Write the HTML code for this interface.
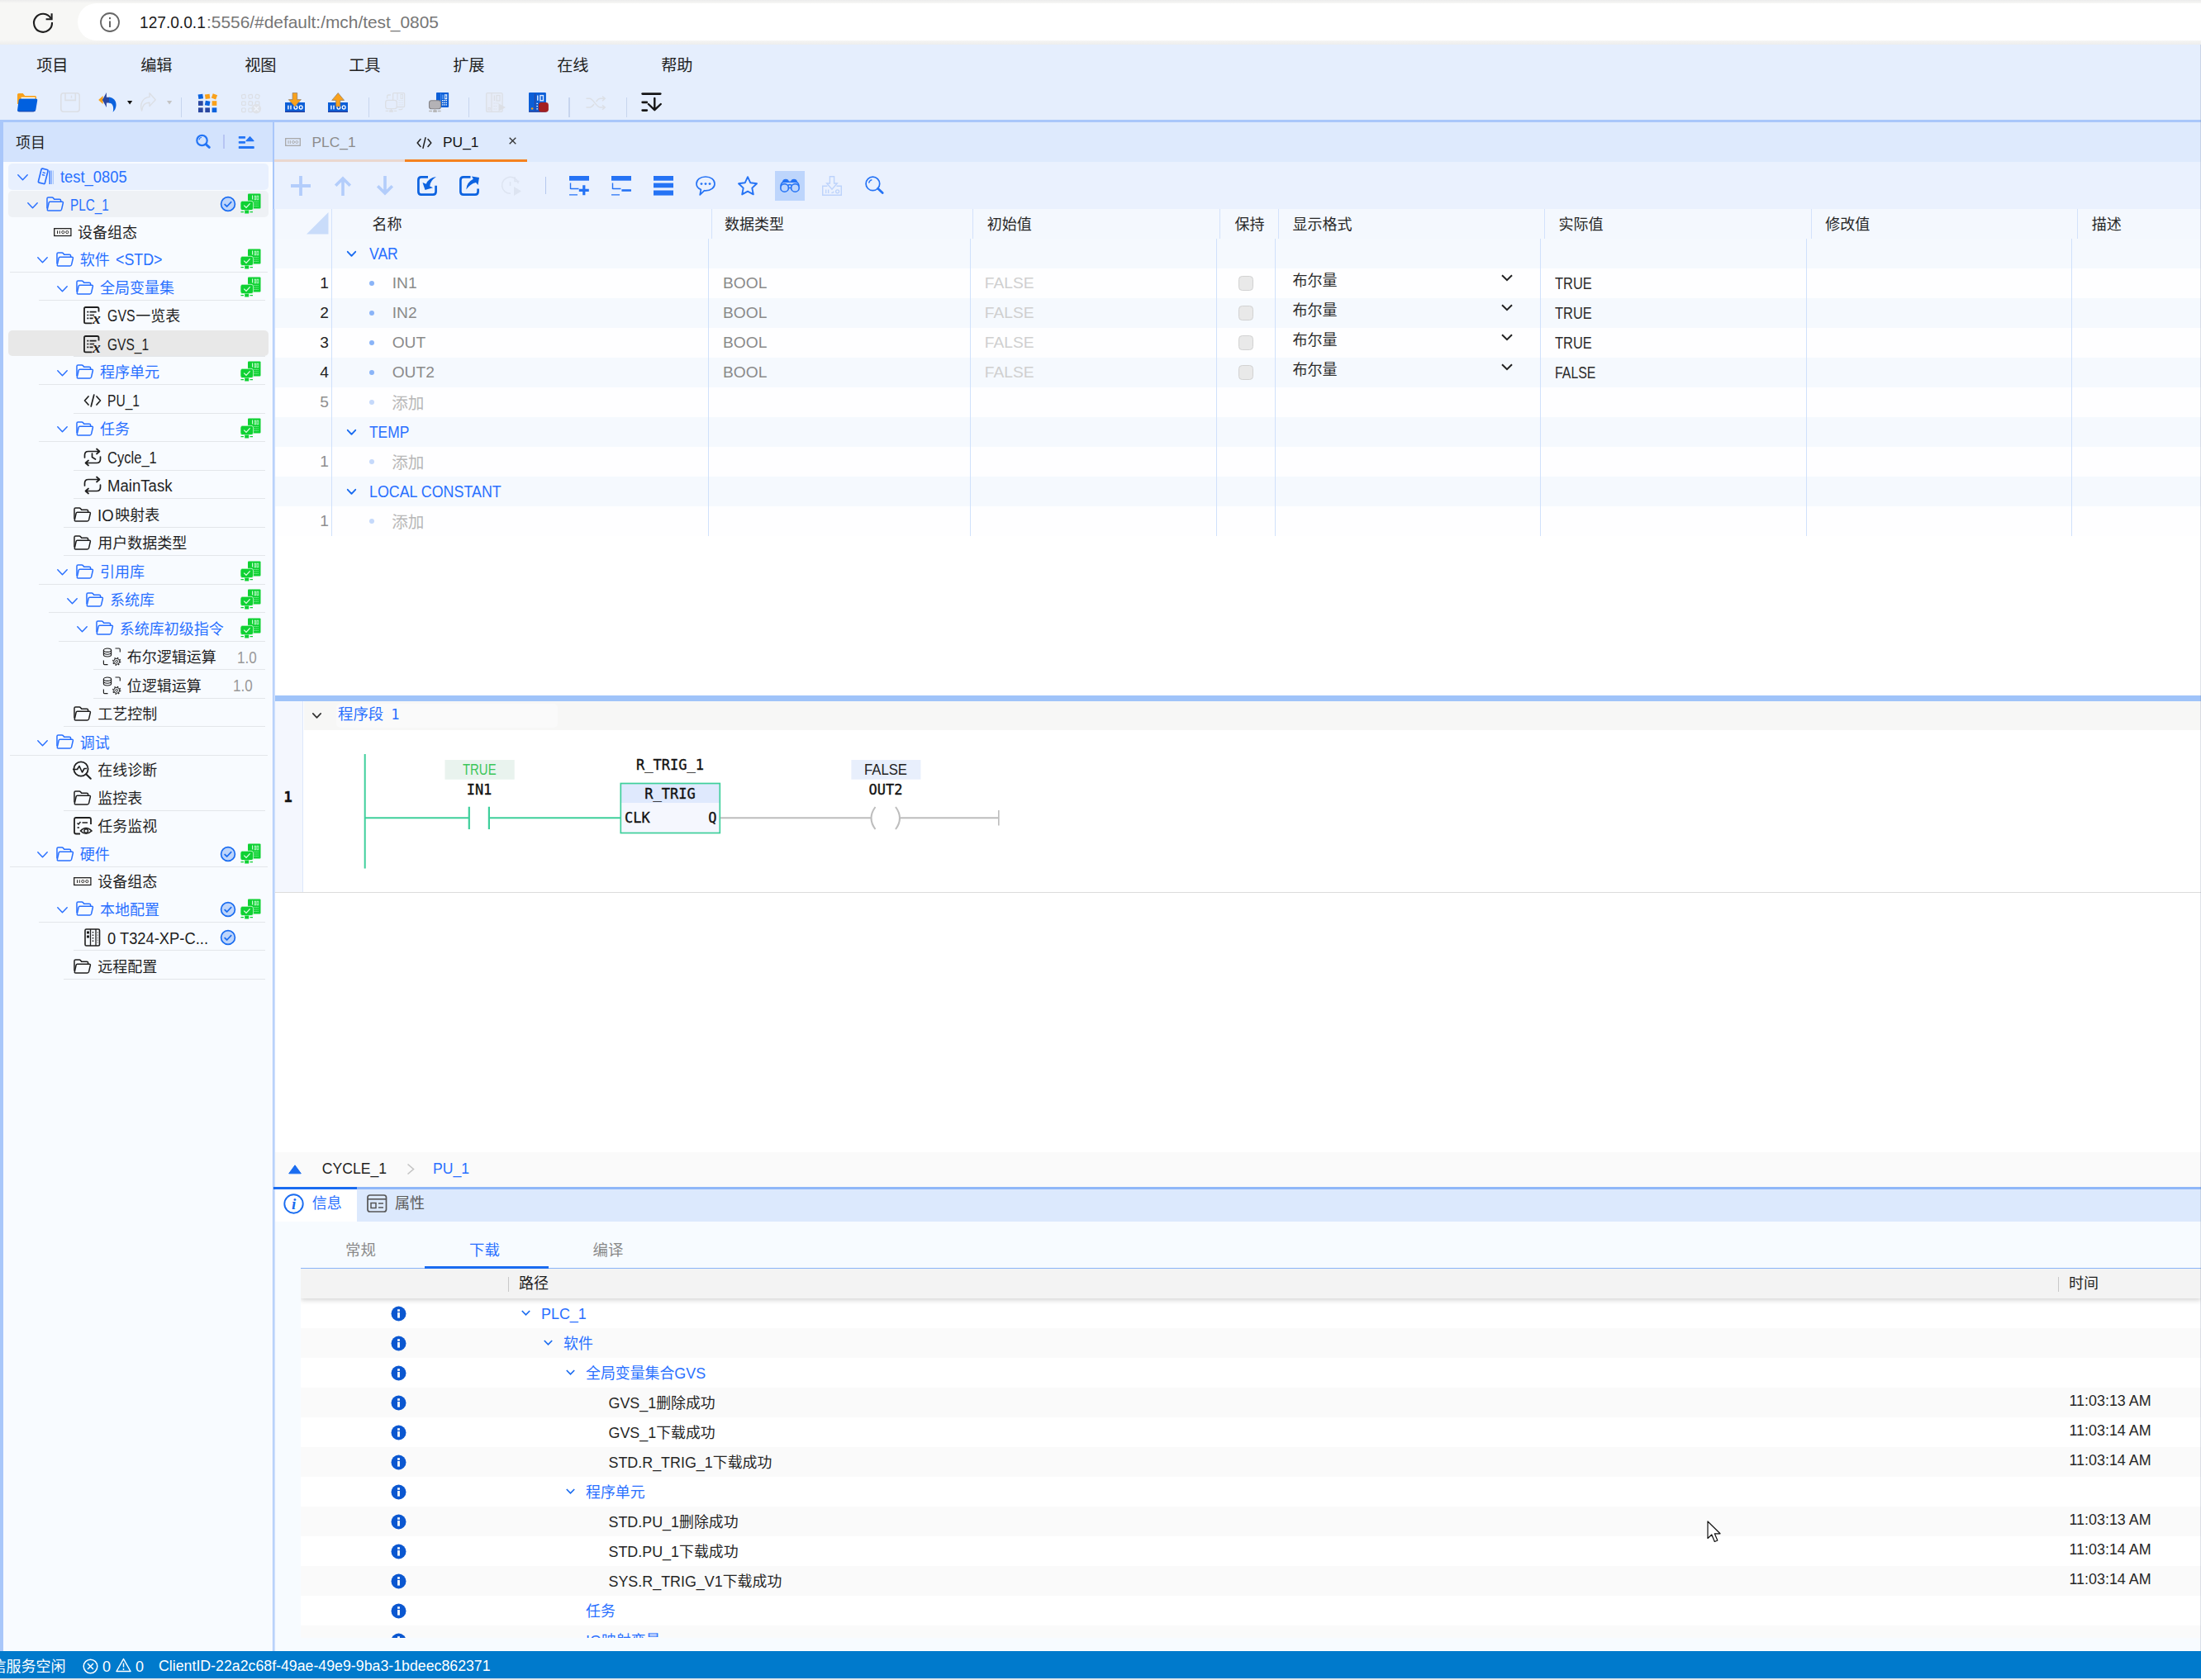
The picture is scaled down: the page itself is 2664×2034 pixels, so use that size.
<!DOCTYPE html>
<html lang="zh-CN"><head><meta charset="utf-8"><title>test_0805</title>
<style>
html,body{margin:0;padding:0}
body{width:2664px;height:2034px;position:relative;overflow:hidden;background:#fff;font-family:"Liberation Sans","Noto Sans CJK SC",sans-serif;color:#222}
.a{position:absolute}
.t{position:absolute;white-space:nowrap}
.m{position:absolute;white-space:nowrap;font-family:"DejaVu Sans Mono","Liberation Mono",monospace;-webkit-text-stroke:.35px currentColor}
svg{overflow:visible}
</style></head><body>

<div class="a" style="left:0px;top:0px;width:2664px;height:54px;background:#f7f7f5;background:linear-gradient(#ececec 0,#f7f7f5 4px,#f7f7f5 48px,#ededed 54px)"></div>
<div class="a" style="left:94px;top:4px;width:2620px;height:45px;background:#fff;border-radius:22.5px"></div>
<svg class="a" style="left:38px;top:13px;" width="28" height="28" viewBox="0 0 28 28"><path d="M23.5 9.2 A11 11 0 1 0 25 14" fill="none" stroke="#1f1f1f" stroke-width="2.1"/><path d="M24.6 3.2 V10.2 H17.6" fill="none" stroke="#1f1f1f" stroke-width="2.1"/></svg>
<svg class="a" style="left:120px;top:14px;" width="26" height="26" viewBox="0 0 26 26"><circle cx="13" cy="13" r="11" fill="none" stroke="#666" stroke-width="1.8"/><rect x="12" y="11.5" width="2" height="7.5" fill="#666"/><rect x="12" y="7" width="2" height="2.2" fill="#666"/></svg>
<div class="t" style="left:168.6px;top:12.0px;height:30px;line-height:30px;font-size:20.4px;color:#1b1b1b;transform:scaleX(0.938);transform-origin:0 50%;">127.0.0.1</div>
<div class="t" style="left:249.8px;top:12.0px;height:30px;line-height:30px;font-size:20.4px;color:#767676;transform:scaleX(1.024);transform-origin:0 50%;">:5556/#default:/mch/test_0805</div>
<div class="a" style="left:0px;top:54px;width:2664px;height:92px;background:#e5eefd;"></div>
<div class="t" style="left:44.2px;top:64.5px;height:30px;line-height:30px;font-size:19.2px;color:#222;">项目</div>
<div class="t" style="left:170.2px;top:64.5px;height:30px;line-height:30px;font-size:19.2px;color:#222;">编辑</div>
<div class="t" style="left:296.2px;top:64.5px;height:30px;line-height:30px;font-size:19.2px;color:#222;">视图</div>
<div class="t" style="left:422.2px;top:64.5px;height:30px;line-height:30px;font-size:19.2px;color:#222;">工具</div>
<div class="t" style="left:548.2px;top:64.5px;height:30px;line-height:30px;font-size:19.2px;color:#222;">扩展</div>
<div class="t" style="left:674.2px;top:64.5px;height:30px;line-height:30px;font-size:19.2px;color:#222;">在线</div>
<div class="t" style="left:800.2px;top:64.5px;height:30px;line-height:30px;font-size:19.2px;color:#222;">帮助</div>
<div class="a" style="left:0px;top:145px;width:2664px;height:3.2px;background:#a9c7fa;"></div>
<svg class="a" style="left:21px;top:112.9px;" width="25" height="23" viewBox="0 0 25 23"><path d="M0 1.6 Q0 0 1.6 0 H6.7 L9.2 3.1 H21.5 Q23 3.1 23 4.6 V13 H0Z" fill="#f9a11b"/><rect x="4.6" y="4.7" width="17" height="2.2" fill="#fff"/><path d="M3.8 6.4 H22.2 Q24.6 6.4 24.2 8.7 L22.3 19.9 Q21.9 22.3 19.5 22.3 H2.2 Q-.2 22.3 .1 19.9 L1.7 8.3 Q2 6.4 3.8 6.4Z" fill="#0060df"/><path d="M.5 20.6 Q1 22.3 2.4 22.3 H19.5 Q21.3 22.3 22 20.6 Q21 21.4 19.5 21.4 H2.6 Q1.2 21.4 .5 20.6Z" fill="#2a3f9d"/></svg>
<svg class="a" style="left:73.2px;top:111.5px;opacity:1;" width="24" height="24" viewBox="0 0 24 24"><rect x=".8" y=".8" width="22.4" height="22.4" rx="3.2" fill="none" stroke="#dcdfe5" stroke-width="1.6"/><path d="M6 1 V9.4 H18.3 V1" fill="none" stroke="#dcdfe5" stroke-width="1.6"/><rect x="12.8" y="3.6" width="1.4" height="3.2" fill="#dcdfe5"/></svg>
<svg class="a" style="left:119px;top:111.9px;" width="24" height="24" viewBox="0 0 24 24"><path d="M.2 9 L5.6 4 V14Z" fill="#f9a11b"/><path d="M4.9 9 L9.9 0 V5.7 H14.5 V12.6 H9.9 V18Z" fill="#2a47a0"/><path d="M13 5.7 C18 5.9 21.9 9.8 21.6 15.4 C21.4 19 19.6 22 17.6 23.8 C18.8 20 18.6 12.9 13 12.6Z" fill="#0b62de"/></svg>
<svg class="a" style="left:154px;top:121.7px;" width="6.2" height="4.4" viewBox="0 0 6.2 4.4"><path d="M0 0H6.2L3.1 4.4Z" fill="#111"/></svg>
<svg class="a" style="left:169px;top:112.3px;" width="20" height="23" viewBox="0 0 20 23"><path d="M12 .8 L19.2 8.7 L12 16.6 V12.3 C7 12 3.5 15 2.6 22 C-.5 13 4.5 6 12 5.4Z" fill="none" stroke="#dcdfe5" stroke-width="1.4" stroke-linejoin="round"/></svg>
<svg class="a" style="left:202px;top:121.7px;" width="6.2" height="4.4" viewBox="0 0 6.2 4.4"><path d="M0 0H6.2L3.1 4.4Z" fill="#c4c4c4"/></svg>
<div class="a" style="left:219px;top:118.4px;width:1.2px;height:23.3px;background:#c7d5ee;"></div>
<svg class="a" style="left:240.1px;top:111.9px;" width="24" height="26" viewBox="0 0 24 26"><rect x="0.0" y="2.0" width="5.7" height="5.7" fill="#0b62de" transform="rotate(-8 2.85 4.85)"/><rect x="8.3" y="2.0" width="5.7" height="5.7" fill="#f9a11b" transform="rotate(-8 11.15 4.85)"/><rect x="16.6" y="2.0" width="5.7" height="5.7" fill="#f9a11b" transform="rotate(20 19.450000000000003 4.85)"/><rect x="0.0" y="10.2" width="5.7" height="5.7" fill="#2a47a0"/><rect x="8.3" y="10.2" width="5.7" height="5.7" fill="#0b62de" transform="rotate(10 11.15 13.049999999999999)"/><rect x="16.6" y="10.2" width="5.7" height="5.7" fill="#f9a11b"/><rect x="0.0" y="18.4" width="5.7" height="5.7" fill="#2a47a0"/><rect x="8.3" y="18.4" width="5.7" height="5.7" fill="#2a47a0"/><rect x="16.6" y="18.4" width="5.7" height="5.7" fill="#0b62de"/></svg>
<svg class="a" style="left:292px;top:111.9px;" width="25" height="26" viewBox="0 0 25 26"><rect x="0.6" y="2.6" width="4.6" height="4.6" rx="1" fill="none" stroke="#dcdfe5" stroke-width="1.2" transform="rotate(-8 2.9 4.9)"/><rect x="8.9" y="2.6" width="4.6" height="4.6" rx="1" fill="none" stroke="#dcdfe5" stroke-width="1.2" transform="rotate(-8 11.2 4.9)"/><rect x="17.2" y="2.6" width="4.6" height="4.6" rx="1" fill="none" stroke="#dcdfe5" stroke-width="1.2" transform="rotate(20 19.500000000000004 4.9)"/><rect x="0.6" y="10.8" width="4.6" height="4.6" rx="1" fill="none" stroke="#dcdfe5" stroke-width="1.2"/><rect x="8.9" y="10.8" width="4.6" height="4.6" rx="1" fill="none" stroke="#dcdfe5" stroke-width="1.2" transform="rotate(10 11.2 13.099999999999998)"/><rect x="17.2" y="10.8" width="4.6" height="4.6" rx="1" fill="none" stroke="#dcdfe5" stroke-width="1.2"/><rect x="0.6" y="19.0" width="4.6" height="4.6" rx="1" fill="none" stroke="#dcdfe5" stroke-width="1.2"/><rect x="8.9" y="19.0" width="4.6" height="4.6" rx="1" fill="none" stroke="#dcdfe5" stroke-width="1.2"/><rect x="17.2" y="19.0" width="4.6" height="4.6" rx="1" fill="none" stroke="#dcdfe5" stroke-width="1.2"/><circle cx="18.3" cy="19.6" r="5.8" fill="#dfe2e8"/><path d="M15.6 16.9 L21 22.3 M21 16.9 L15.6 22.3" stroke="#eef3fc" stroke-width="1.5"/></svg>
<svg class="a" style="left:345px;top:111.9px;" width="24" height="24" viewBox="0 0 24 24"><rect x="0" y="12" width="24" height="12" fill="#0b5ed7"/><rect x="0" y="22.7" width="24" height="1.3" fill="#2a3f9d"/><rect x="3.2" y="15.6" width="1.4" height="4.8" fill="#fff"/><rect x="6.3" y="15.6" width="1.4" height="4.8" fill="#fff"/><ellipse cx="12.9" cy="18" rx="1.9" ry="2.1" fill="none" stroke="#fff" stroke-width="1.3"/><ellipse cx="19.2" cy="18" rx="1.9" ry="2.1" fill="none" stroke="#fff" stroke-width="1.3"/><path d="M9.1 .5 H14.7 V8.6 H19.4 L11.9 17 L4.3 8.6 H9.1Z" fill="#f9a11b" stroke="#8d7a66" stroke-width=".7"/></svg>
<svg class="a" style="left:397px;top:111.9px;" width="24" height="24" viewBox="0 0 24 24"><rect x="0" y="12" width="24" height="12" fill="#0b5ed7"/><rect x="0" y="22.7" width="24" height="1.3" fill="#2a3f9d"/><rect x="3.2" y="15.6" width="1.4" height="4.8" fill="#fff"/><rect x="6.3" y="15.6" width="1.4" height="4.8" fill="#fff"/><ellipse cx="12.9" cy="18" rx="1.9" ry="2.1" fill="none" stroke="#fff" stroke-width="1.3"/><ellipse cx="19.2" cy="18" rx="1.9" ry="2.1" fill="none" stroke="#fff" stroke-width="1.3"/><path d="M9.6 17 H14.8 V9.4 H19.6 L12.2 .5 L4.7 9.4 H9.6Z" fill="#f9a11b" stroke="#8d7a66" stroke-width=".7"/></svg>
<div class="a" style="left:445.5px;top:118.4px;width:1.2px;height:23.3px;background:#c7d5ee;"></div>
<svg class="a" style="left:466px;top:111.9px;" width="25" height="24" viewBox="0 0 25 24"><rect x="9.6" y=".7" width="14" height="16.8" rx="1" fill="none" stroke="#dcdfe5" stroke-width="1.3"/><path d="M15 .7 V9" stroke="#dcdfe5" stroke-width="1.1"/><rect x="19" y="2.4" width="2.4" height="5" fill="none" stroke="#dcdfe5" stroke-width="1"/><path d="M16.5 9.7 h5.5 M16.5 12.3 h5.5 M16.5 14.8 h5.5" stroke="#dcdfe5" stroke-width="1" stroke-dasharray="1.2 1"/><rect x=".7" y="9.3" width="13.6" height="10.4" rx="2.6" fill="#e5edfc" stroke="#dcdfe5" stroke-width="1.3"/><path d="M7.5 19.7 V23.2 M.7 22.4 H4.2 M10.8 22.4 H14.3" stroke="#dcdfe5" stroke-width="1.3"/><rect x="5.2" y="21.3" width="4.6" height="2.5" fill="#dcdfe5"/><path d="M2.6 7.5 V4.5 Q2.6 3 4.1 3 H7 M21 19.2 Q21 20.7 19.5 20.7 H16.5" fill="none" stroke="#dcdfe5" stroke-width="1.3"/></svg>
<svg class="a" style="left:519px;top:111.9px;" width="25" height="24" viewBox="0 0 25 24"><rect x="9" y="0" width="15.1" height="17.9" rx=".8" fill="#0b5ed7"/><path d="M14.6 1 V17" stroke="#3f86ee" stroke-width="1"/><path d="M16.4 2.6 V8 M18 2.6 V8" stroke="#5b9bf3" stroke-width="1"/><rect x="19.6" y="2.6" width="2.4" height="5.4" fill="#fff" stroke="#fff" stroke-width=".4"/><rect x="20.3" y="3.5" width="1" height="3.6" fill="#0b5ed7"/><path d="M16 9.7 h6 M16 12.3 h6 M16 14.8 h6" stroke="#fff" stroke-width="1.3" stroke-dasharray="1.5 .8"/><rect x=".5" y="9.7" width="14" height="10" rx="2.8" fill="#b4b2b6" stroke="#858387" stroke-width="1.1"/><path d="M7.4 19.7 V22 M.2 22.5 H4 M10.8 22.5 H14.6" stroke="#b9b9b9" stroke-width="1.3"/><rect x="5.2" y="21.3" width="4.6" height="2.6" fill="#b4b4b4"/></svg>
<div class="a" style="left:567.3px;top:118.4px;width:1.2px;height:23.3px;background:#c7d5ee;"></div>
<svg class="a" style="left:588px;top:111.9px;" width="25" height="24" viewBox="0 0 25 24"><rect x=".7" y=".7" width="19.4" height="22.6" rx="1.3" fill="#e6ecf8" stroke="#dcdfe5" stroke-width="1.3"/><path d="M7 .7 V23.3" stroke="#dcdfe5" stroke-width="1.2"/><path d="M10.4 3.5 V10" stroke="#dcdfe5" stroke-width="1.3"/><rect x="13" y="3.5" width="4" height="6.5" fill="none" stroke="#dcdfe5" stroke-width="1.2"/><path d="M9.5 13 h7 M9.5 16.5 h4 M9.5 20 h4" stroke="#dcdfe5" stroke-width="1.2" stroke-dasharray="1.3 1"/><rect x="3" y="18.5" width="2.2" height="2.6" fill="none" stroke="#dcdfe5" stroke-width=".9"/><path d="M15.5 13.3 L24 18 L15.5 22.7Z" fill="#dcdfe5"/></svg>
<svg class="a" style="left:640px;top:112px;" width="25" height="24" viewBox="0 0 25 24"><rect x="0" y="0" width="20.9" height="23.7" rx="1" fill="#0b5ed7"/><rect x="0" y="22.3" width="14" height="1.4" fill="#2a47a0"/><path d="M7.6 1.5 V22" stroke="#2a47a0" stroke-width="1.4"/><path d="M10.8 3.6 V9.8" stroke="#dbe8ff" stroke-width="1.5"/><rect x="13.9" y="3.6" width="3.6" height="6.2" fill="none" stroke="#dbe8ff" stroke-width="1.4"/><path d="M10.2 12.8 v1.3 M10.2 16 v1.3 M10.2 19.2 v1.3" stroke="#fff" stroke-width="1.5"/><circle cx="4.1" cy="19.5" r="1.3" fill="#f9a11b"/><rect x="11.9" y="12" width="12" height="11.7" rx="3.4" fill="#a31f1f"/></svg>
<div class="a" style="left:688.4px;top:118.4px;width:1.2px;height:23.3px;background:#c7d5ee;"></div>
<svg class="a" style="left:709px;top:111.9px;" width="25" height="24" viewBox="0 0 25 24"><path d="M.5 7.3 H4.5 C9.5 7.3 12.5 18 17.5 18 H22.5 M.5 18 H4.5 C7 18 8.6 16 10 14 M12.6 11 C14 9 15.6 7.3 17.5 7.3 H22.5" fill="none" stroke="#dcdfe5" stroke-width="1.4"/><path d="M20 4.5 L23.3 7.3 L20 10.1 M20 15.2 L23.3 18 L20 20.8" fill="none" stroke="#dcdfe5" stroke-width="1.4"/></svg>
<div class="a" style="left:757.5px;top:118.4px;width:1.2px;height:23.3px;background:#c7d5ee;"></div>
<svg class="a" style="left:776px;top:111.9px;" width="25" height="24" viewBox="0 0 25 24"><path d="M1.7 1.6 H23.2" stroke="#161616" stroke-width="2.8" stroke-linecap="round"/><path d="M1.7 11.8 H6.8 M1.7 21.6 H6.8" stroke="#161616" stroke-width="2.8" stroke-linecap="round"/><path d="M16.3 7 V20.5 M8.8 14 L16.3 21.2 L23.8 14" fill="none" stroke="#161616" stroke-width="2.4" stroke-linecap="round" stroke-linejoin="round"/></svg>
<div class="a" style="left:0px;top:148px;width:3.6px;height:1851px;background:#a9c7fa;"></div>
<div class="a" style="left:3.6px;top:148px;width:326px;height:48px;background:#d3e3fd;"></div>
<div class="a" style="left:3.6px;top:196px;width:326px;height:1803px;background:#f8fbff;"></div>
<div class="a" style="left:329.5px;top:148px;width:2.8px;height:105px;background:#a9c7fa;"></div>
<div class="a" style="left:329.5px;top:253px;width:1.8px;height:1746px;background:#a9c7fa;"></div>
<div class="a" style="left:331.3px;top:253px;width:1.4px;height:1746px;background:#c9dcfb;"></div>
<div class="t" style="left:19px;top:157.5px;height:30px;line-height:30px;font-size:18px;color:#1f1f1f;">项目</div>
<svg class="a" style="left:236px;top:161px;" width="20" height="20" viewBox="0 0 20 20"><circle cx="8.5" cy="9" r="6.2" fill="none" stroke="#2475f5" stroke-width="2.2"/><path d="M13.4 13.9 L17.3 17.3" stroke="#2475f5" stroke-width="3" stroke-linecap="round"/><path d="M5 8.3 A3.7 3.7 0 0 1 8 5.2" fill="none" stroke="#2475f5" stroke-width="1.1"/></svg>
<div class="a" style="left:270.3px;top:163.2px;width:1.4px;height:17.3px;background:#b7c5f3;"></div>
<svg class="a" style="left:288px;top:164px;" width="21" height="17" viewBox="0 0 21 17"><rect x=".75" y="1" width="8.3" height="2.8" rx=".8" fill="#2475f5"/><rect x=".75" y="7" width="8.3" height="2.8" rx=".8" fill="#2475f5"/><rect x=".75" y="13" width="19" height="3" rx=".8" fill="#2475f5"/><path d="M14.5 1.6 L19 6.6 H10Z" fill="#2475f5" stroke="#2475f5" stroke-width="1.2" stroke-linejoin="round"/></svg>
<div class="a" style="left:10px;top:198px;width:315px;height:31.5px;background:#e8f0fe;border-radius:5px"></div>
<div class="a" style="left:10px;top:231.3px;width:315px;height:31.7px;background:#eef1f5;border-radius:5px"></div>
<div class="a" style="left:10px;top:400.3px;width:315px;height:31px;background:#e8e8e8;border-radius:5px"></div>
<svg class="a" style="left:21.0px;top:210.65px;" width="13" height="8.5" viewBox="0 0 13 8.5"><path d="M0.8 0.8 L6.5 6.8 L12.2 0.8" fill="none" stroke="#2970ff" stroke-width="1.45" stroke-linecap="round" stroke-linejoin="round"/></svg>
<svg class="a" style="left:45.5px;top:203.4px;" width="20" height="21" viewBox="0 0 20 21"><g transform="rotate(14 6 10)"><rect x="2.2" y="1.5" width="8.2" height="17.5" rx="1.2" fill="none" stroke="#2970ff" stroke-width="1.7"/><path d="M4.6 6 H8 M4.6 8.8 H8" stroke="#2970ff" stroke-width="1.4"/></g><path d="M14.2 3.5 V20" stroke="#2970ff" stroke-width="1.4"/><path d="M16.4 3.5 V20" stroke="#7aa6ff" stroke-width="1.2"/><path d="M18.4 3.5 V20" stroke="#a9c7fa" stroke-width="1.1"/></svg>
<div class="t" style="left:73px;top:199.2px;height:30px;line-height:30px;font-size:19.6px;color:#2970ff;transform:scaleX(0.937);transform-origin:0 50%;">test_0805</div>
<svg class="a" style="left:33.0px;top:244.55px;" width="13" height="8.5" viewBox="0 0 13 8.5"><path d="M0.8 0.8 L6.5 6.8 L12.2 0.8" fill="none" stroke="#2970ff" stroke-width="1.45" stroke-linecap="round" stroke-linejoin="round"/></svg>
<svg class="a" style="left:55.8px;top:237.7px" width="21.3" height="17.9" viewBox="0 0 22 19" preserveAspectRatio="none"><path d="M1 15.5 V2.6 Q1 1 2.6 1 H7.2 Q8.2 1 8.8 1.8 L10 3.4 H16.6 Q18.2 3.4 18.2 5 V6.6" fill="none" stroke="#2970ff" stroke-width="1.55" stroke-linejoin="round"/><path d="M4.6 6.6 H19.8 Q21.4 6.6 21 8.2 L19.2 16.4 Q18.8 18 17.2 18 H2.6 Q1 18 1.4 16.4 L3.2 8 Q3.6 6.6 4.6 6.6Z" fill="none" stroke="#2970ff" stroke-width="1.55" stroke-linejoin="round"/></svg>
<div class="t" style="left:85.1px;top:232.6px;height:30px;line-height:30px;font-size:19.6px;color:#2970ff;transform:scaleX(0.779);transform-origin:0 50%;">PLC_1</div>
<svg class="a" style="left:266px;top:237.3px;" width="20" height="20" viewBox="0 0 20 20"><circle cx="10" cy="10" r="8.4" fill="#bed5fb" stroke="#1a6cf0" stroke-width="1.7"/><path d="M5.6 10.2 L8.7 13 L14.2 7.2" fill="none" stroke="#1a6cf0" stroke-width="1.7" stroke-linejoin="round"/></svg>
<svg class="a" style="left:290.8px;top:234.10000000000002px;" width="25" height="25" viewBox="0 0 25 25"><rect x="9" y=".5" width="15.5" height="18" rx="1" fill="#0fd133"/><path d="M14.5 2.5 V7.5" stroke="#d8ffe0" stroke-width="1"/><rect x="17" y="3.2" width="1.6" height="4.6" fill="none" stroke="#b5f7c2" stroke-width=".9"/><rect x="20" y="3.2" width="1.8" height="4.6" fill="none" stroke="#b5f7c2" stroke-width=".9"/><path d="M16.5 10.5 h6 M16.5 13 h6 M16.5 15.5 h6" stroke="#7fee97" stroke-width="1.1" stroke-dasharray="1.3 .7"/><rect x="0" y="9.3" width="15.6" height="11.3" rx="2.6" fill="#0fd133" stroke="#f4fff6" stroke-width=".7"/><path d="M4.3 14.6 L7 17.4 L11.6 12.4" fill="none" stroke="#e6ffe9" stroke-width="1.2"/><rect x="5.2" y="20.5" width="5" height="4" fill="#0fd133"/><path d="M.5 22.6 H4 M11.5 22.6 H15" stroke="#0fd133" stroke-width="1.3"/></svg>
<svg class="a" style="left:64.8px;top:276.0px;" width="22" height="11" viewBox="0 0 22 11"><rect x=".7" y=".7" width="20.2" height="8.8" fill="#fff" stroke="#1f1f1f" stroke-width="1.3"/><path d="M4.5 3.3 V7 M7.2 3.3 V7" stroke="#1f1f1f" stroke-width="1"/><circle cx="11.3" cy="5.1" r="1.6" fill="none" stroke="#1f1f1f" stroke-width=".9"/><circle cx="16.3" cy="5.1" r="1.6" fill="none" stroke="#1f1f1f" stroke-width=".9"/></svg>
<div class="t" style="left:94px;top:267.3px;height:30px;line-height:30px;font-size:18px;color:#1f1f1f;">设备组态</div>
<div class="a" style="left:12px;top:329px;width:311.5px;height:1px;background:#e3e6ea;"></div>
<svg class="a" style="left:44.7px;top:311.35px;" width="13" height="8.5" viewBox="0 0 13 8.5"><path d="M0.8 0.8 L6.5 6.8 L12.2 0.8" fill="none" stroke="#2970ff" stroke-width="1.45" stroke-linecap="round" stroke-linejoin="round"/></svg>
<svg class="a" style="left:67.5px;top:304.5px" width="21.3" height="17.9" viewBox="0 0 22 19" preserveAspectRatio="none"><path d="M1 15.5 V2.6 Q1 1 2.6 1 H7.2 Q8.2 1 8.8 1.8 L10 3.4 H16.6 Q18.2 3.4 18.2 5 V6.6" fill="none" stroke="#2970ff" stroke-width="1.55" stroke-linejoin="round"/><path d="M4.6 6.6 H19.8 Q21.4 6.6 21 8.2 L19.2 16.4 Q18.8 18 17.2 18 H2.6 Q1 18 1.4 16.4 L3.2 8 Q3.6 6.6 4.6 6.6Z" fill="none" stroke="#2970ff" stroke-width="1.55" stroke-linejoin="round"/></svg>
<div class="t" style="left:96.80000000000001px;top:299.9px;height:30px;line-height:30px;font-size:18px;color:#2970ff;">软件</div>
<div class="t" style="left:140.3px;top:299.4px;height:30px;line-height:30px;font-size:19.6px;color:#2970ff;transform:scaleX(0.910);transform-origin:0 50%;">&lt;STD&gt;</div>
<svg class="a" style="left:290.8px;top:300.90000000000003px;" width="25" height="25" viewBox="0 0 25 25"><rect x="9" y=".5" width="15.5" height="18" rx="1" fill="#0fd133"/><path d="M14.5 2.5 V7.5" stroke="#d8ffe0" stroke-width="1"/><rect x="17" y="3.2" width="1.6" height="4.6" fill="none" stroke="#b5f7c2" stroke-width=".9"/><rect x="20" y="3.2" width="1.8" height="4.6" fill="none" stroke="#b5f7c2" stroke-width=".9"/><path d="M16.5 10.5 h6 M16.5 13 h6 M16.5 15.5 h6" stroke="#7fee97" stroke-width="1.1" stroke-dasharray="1.3 .7"/><rect x="0" y="9.3" width="15.6" height="11.3" rx="2.6" fill="#0fd133" stroke="#f4fff6" stroke-width=".7"/><path d="M4.3 14.6 L7 17.4 L11.6 12.4" fill="none" stroke="#e6ffe9" stroke-width="1.2"/><rect x="5.2" y="20.5" width="5" height="4" fill="#0fd133"/><path d="M.5 22.6 H4 M11.5 22.6 H15" stroke="#0fd133" stroke-width="1.3"/></svg>
<div class="a" style="left:47px;top:363px;width:274px;height:1px;background:#e3e6ea;"></div>
<svg class="a" style="left:69.0px;top:345.75px;" width="13" height="8.5" viewBox="0 0 13 8.5"><path d="M0.8 0.8 L6.5 6.8 L12.2 0.8" fill="none" stroke="#2970ff" stroke-width="1.45" stroke-linecap="round" stroke-linejoin="round"/></svg>
<svg class="a" style="left:91.8px;top:338.9px" width="21.3" height="17.9" viewBox="0 0 22 19" preserveAspectRatio="none"><path d="M1 15.5 V2.6 Q1 1 2.6 1 H7.2 Q8.2 1 8.8 1.8 L10 3.4 H16.6 Q18.2 3.4 18.2 5 V6.6" fill="none" stroke="#2970ff" stroke-width="1.55" stroke-linejoin="round"/><path d="M4.6 6.6 H19.8 Q21.4 6.6 21 8.2 L19.2 16.4 Q18.8 18 17.2 18 H2.6 Q1 18 1.4 16.4 L3.2 8 Q3.6 6.6 4.6 6.6Z" fill="none" stroke="#2970ff" stroke-width="1.55" stroke-linejoin="round"/></svg>
<div class="t" style="left:121.1px;top:334.3px;height:30px;line-height:30px;font-size:18px;color:#2970ff;">全局变量集</div>
<svg class="a" style="left:290.8px;top:335.3px;" width="25" height="25" viewBox="0 0 25 25"><rect x="9" y=".5" width="15.5" height="18" rx="1" fill="#0fd133"/><path d="M14.5 2.5 V7.5" stroke="#d8ffe0" stroke-width="1"/><rect x="17" y="3.2" width="1.6" height="4.6" fill="none" stroke="#b5f7c2" stroke-width=".9"/><rect x="20" y="3.2" width="1.8" height="4.6" fill="none" stroke="#b5f7c2" stroke-width=".9"/><path d="M16.5 10.5 h6 M16.5 13 h6 M16.5 15.5 h6" stroke="#7fee97" stroke-width="1.1" stroke-dasharray="1.3 .7"/><rect x="0" y="9.3" width="15.6" height="11.3" rx="2.6" fill="#0fd133" stroke="#f4fff6" stroke-width=".7"/><path d="M4.3 14.6 L7 17.4 L11.6 12.4" fill="none" stroke="#e6ffe9" stroke-width="1.2"/><rect x="5.2" y="20.5" width="5" height="4" fill="#0fd133"/><path d="M.5 22.6 H4 M11.5 22.6 H15" stroke="#0fd133" stroke-width="1.3"/></svg>
<svg class="a" style="left:100.8px;top:371.4px;" width="22" height="22" viewBox="0 0 22 22"><path d="M18.5 6.5 V2.6 Q18.5 1 16.9 1 H2.6 Q1 1 1 2.6 V18.8 Q1 20.4 2.6 20.4 H10.5" fill="none" stroke="#1f1f1f" stroke-width="1.8"/><path d="M4.3 6.6 h2 M7.6 6.6 h8 M4.3 10.5 h2 M7.6 10.5 h5.5 M4.3 14.4 h2 M7.6 14.4 h4" stroke="#1f1f1f" stroke-width="1.6"/><text x="11.2" y="20.6" font-family="Liberation Serif,serif" font-style="italic" font-weight="bold" font-size="19" fill="#1f1f1f">x</text></svg>
<div class="t" style="left:129.6px;top:367.2px;height:30px;line-height:30px;font-size:19.6px;color:#1f1f1f;transform:scaleX(0.812);transform-origin:0 50%;">GVS</div>
<div class="t" style="left:164.3px;top:367.7px;height:30px;line-height:30px;font-size:18px;color:#1f1f1f;">一览表</div>
<div class="a" style="left:89px;top:431px;width:232px;height:1px;background:#e3e6ea;"></div>
<svg class="a" style="left:100.8px;top:405.8px;" width="22" height="22" viewBox="0 0 22 22"><path d="M18.5 6.5 V2.6 Q18.5 1 16.9 1 H2.6 Q1 1 1 2.6 V18.8 Q1 20.4 2.6 20.4 H10.5" fill="none" stroke="#1f1f1f" stroke-width="1.8"/><path d="M4.3 6.6 h2 M7.6 6.6 h8 M4.3 10.5 h2 M7.6 10.5 h5.5 M4.3 14.4 h2 M7.6 14.4 h4" stroke="#1f1f1f" stroke-width="1.6"/><text x="11.2" y="20.6" font-family="Liberation Serif,serif" font-style="italic" font-weight="bold" font-size="19" fill="#1f1f1f">x</text></svg>
<div class="t" style="left:129.6px;top:401.6px;height:30px;line-height:30px;font-size:19.6px;color:#1f1f1f;transform:scaleX(0.794);transform-origin:0 50%;">GVS_1</div>
<div class="a" style="left:47px;top:465px;width:274px;height:1px;background:#e3e6ea;"></div>
<svg class="a" style="left:69.0px;top:447.75px;" width="13" height="8.5" viewBox="0 0 13 8.5"><path d="M0.8 0.8 L6.5 6.8 L12.2 0.8" fill="none" stroke="#2970ff" stroke-width="1.45" stroke-linecap="round" stroke-linejoin="round"/></svg>
<svg class="a" style="left:91.8px;top:440.9px" width="21.3" height="17.9" viewBox="0 0 22 19" preserveAspectRatio="none"><path d="M1 15.5 V2.6 Q1 1 2.6 1 H7.2 Q8.2 1 8.8 1.8 L10 3.4 H16.6 Q18.2 3.4 18.2 5 V6.6" fill="none" stroke="#2970ff" stroke-width="1.55" stroke-linejoin="round"/><path d="M4.6 6.6 H19.8 Q21.4 6.6 21 8.2 L19.2 16.4 Q18.8 18 17.2 18 H2.6 Q1 18 1.4 16.4 L3.2 8 Q3.6 6.6 4.6 6.6Z" fill="none" stroke="#2970ff" stroke-width="1.55" stroke-linejoin="round"/></svg>
<div class="t" style="left:121.1px;top:436.3px;height:30px;line-height:30px;font-size:18px;color:#2970ff;">程序单元</div>
<svg class="a" style="left:290.8px;top:437.3px;" width="25" height="25" viewBox="0 0 25 25"><rect x="9" y=".5" width="15.5" height="18" rx="1" fill="#0fd133"/><path d="M14.5 2.5 V7.5" stroke="#d8ffe0" stroke-width="1"/><rect x="17" y="3.2" width="1.6" height="4.6" fill="none" stroke="#b5f7c2" stroke-width=".9"/><rect x="20" y="3.2" width="1.8" height="4.6" fill="none" stroke="#b5f7c2" stroke-width=".9"/><path d="M16.5 10.5 h6 M16.5 13 h6 M16.5 15.5 h6" stroke="#7fee97" stroke-width="1.1" stroke-dasharray="1.3 .7"/><rect x="0" y="9.3" width="15.6" height="11.3" rx="2.6" fill="#0fd133" stroke="#f4fff6" stroke-width=".7"/><path d="M4.3 14.6 L7 17.4 L11.6 12.4" fill="none" stroke="#e6ffe9" stroke-width="1.2"/><rect x="5.2" y="20.5" width="5" height="4" fill="#0fd133"/><path d="M.5 22.6 H4 M11.5 22.6 H15" stroke="#0fd133" stroke-width="1.3"/></svg>
<div class="a" style="left:89px;top:500px;width:232px;height:1px;background:#e3e6ea;"></div>
<svg class="a" style="left:100.8px;top:477.0px;" width="22" height="16" viewBox="0 0 22 16"><path d="M6 3 L1.5 8 L6 13 M16 3 L20.5 8 L16 13 M12.8 1 L9.2 15" fill="none" stroke="#1f1f1f" stroke-width="1.7" stroke-linecap="round" stroke-linejoin="round"/></svg>
<div class="t" style="left:129.6px;top:470.3px;height:30px;line-height:30px;font-size:19.6px;color:#1f1f1f;transform:scaleX(0.795);transform-origin:0 50%;">PU_1</div>
<div class="a" style="left:47px;top:534px;width:274px;height:1px;background:#e3e6ea;"></div>
<svg class="a" style="left:69.0px;top:516.35px;" width="13" height="8.5" viewBox="0 0 13 8.5"><path d="M0.8 0.8 L6.5 6.8 L12.2 0.8" fill="none" stroke="#2970ff" stroke-width="1.45" stroke-linecap="round" stroke-linejoin="round"/></svg>
<svg class="a" style="left:91.8px;top:509.5px" width="21.3" height="17.9" viewBox="0 0 22 19" preserveAspectRatio="none"><path d="M1 15.5 V2.6 Q1 1 2.6 1 H7.2 Q8.2 1 8.8 1.8 L10 3.4 H16.6 Q18.2 3.4 18.2 5 V6.6" fill="none" stroke="#2970ff" stroke-width="1.55" stroke-linejoin="round"/><path d="M4.6 6.6 H19.8 Q21.4 6.6 21 8.2 L19.2 16.4 Q18.8 18 17.2 18 H2.6 Q1 18 1.4 16.4 L3.2 8 Q3.6 6.6 4.6 6.6Z" fill="none" stroke="#2970ff" stroke-width="1.55" stroke-linejoin="round"/></svg>
<div class="t" style="left:121.1px;top:504.9px;height:30px;line-height:30px;font-size:18px;color:#2970ff;">任务</div>
<svg class="a" style="left:290.8px;top:505.9px;" width="25" height="25" viewBox="0 0 25 25"><rect x="9" y=".5" width="15.5" height="18" rx="1" fill="#0fd133"/><path d="M14.5 2.5 V7.5" stroke="#d8ffe0" stroke-width="1"/><rect x="17" y="3.2" width="1.6" height="4.6" fill="none" stroke="#b5f7c2" stroke-width=".9"/><rect x="20" y="3.2" width="1.8" height="4.6" fill="none" stroke="#b5f7c2" stroke-width=".9"/><path d="M16.5 10.5 h6 M16.5 13 h6 M16.5 15.5 h6" stroke="#7fee97" stroke-width="1.1" stroke-dasharray="1.3 .7"/><rect x="0" y="9.3" width="15.6" height="11.3" rx="2.6" fill="#0fd133" stroke="#f4fff6" stroke-width=".7"/><path d="M4.3 14.6 L7 17.4 L11.6 12.4" fill="none" stroke="#e6ffe9" stroke-width="1.2"/><rect x="5.2" y="20.5" width="5" height="4" fill="#0fd133"/><path d="M.5 22.6 H4 M11.5 22.6 H15" stroke="#0fd133" stroke-width="1.3"/></svg>
<div class="a" style="left:89px;top:569px;width:232px;height:1px;background:#e3e6ea;"></div>
<svg class="a" style="left:100.8px;top:543.3px;" width="22" height="21" viewBox="0 0 22 21"><path d="M1.5 11 V8 Q1.5 3.5 6 3.5 H19 M16 .5 L19.5 3.5 L16 6.5" fill="none" stroke="#1f1f1f" stroke-width="1.7" stroke-linecap="round" stroke-linejoin="round"/><path d="M20.5 10 V13 Q20.5 17.5 16 17.5 H3 M6 14.5 L2.5 17.5 L6 20.5" fill="none" stroke="#1f1f1f" stroke-width="1.7" stroke-linecap="round" stroke-linejoin="round"/><path d="M10.5 6 V10.5 L14.5 13" fill="none" stroke="#1f1f1f" stroke-width="1.7" stroke-linecap="round" stroke-linejoin="round"/></svg>
<div class="t" style="left:129.6px;top:539.1px;height:30px;line-height:30px;font-size:19.6px;color:#1f1f1f;transform:scaleX(0.845);transform-origin:0 50%;">Cycle_1</div>
<div class="a" style="left:89px;top:603px;width:232px;height:1px;background:#e3e6ea;"></div>
<svg class="a" style="left:100.8px;top:577.3px;" width="22" height="21" viewBox="0 0 22 21"><path d="M1.5 11 V8 Q1.5 3.5 6 3.5 H19 M16 .5 L19.5 3.5 L16 6.5" fill="none" stroke="#1f1f1f" stroke-width="1.7" stroke-linecap="round" stroke-linejoin="round"/><path d="M20.5 10 V13 Q20.5 17.5 16 17.5 H3 M6 14.5 L2.5 17.5 L6 20.5" fill="none" stroke="#1f1f1f" stroke-width="1.7" stroke-linecap="round" stroke-linejoin="round"/></svg>
<div class="t" style="left:129.6px;top:573.1px;height:30px;line-height:30px;font-size:19.6px;color:#1f1f1f;transform:scaleX(0.948);transform-origin:0 50%;">MainTask</div>
<div class="a" style="left:77px;top:638px;width:244px;height:1px;background:#e3e6ea;"></div>
<svg class="a" style="left:88.7px;top:613.7px" width="21.3" height="17.9" viewBox="0 0 22 19" preserveAspectRatio="none"><path d="M1 15.5 V2.6 Q1 1 2.6 1 H7.2 Q8.2 1 8.8 1.8 L10 3.4 H16.6 Q18.2 3.4 18.2 5 V6.6" fill="none" stroke="#1f1f1f" stroke-width="1.55" stroke-linejoin="round"/><path d="M4.6 6.6 H19.8 Q21.4 6.6 21 8.2 L19.2 16.4 Q18.8 18 17.2 18 H2.6 Q1 18 1.4 16.4 L3.2 8 Q3.6 6.6 4.6 6.6Z" fill="none" stroke="#1f1f1f" stroke-width="1.55" stroke-linejoin="round"/></svg>
<div class="t" style="left:118.2px;top:608.6px;height:30px;line-height:30px;font-size:19.6px;color:#1f1f1f;transform:scaleX(0.947);transform-origin:0 50%;">IO</div>
<div class="t" style="left:139.3px;top:609.1px;height:30px;line-height:30px;font-size:18px;color:#1f1f1f;">映射表</div>
<div class="a" style="left:77px;top:672px;width:244px;height:1px;background:#e3e6ea;"></div>
<svg class="a" style="left:88.7px;top:647.5px" width="21.3" height="17.9" viewBox="0 0 22 19" preserveAspectRatio="none"><path d="M1 15.5 V2.6 Q1 1 2.6 1 H7.2 Q8.2 1 8.8 1.8 L10 3.4 H16.6 Q18.2 3.4 18.2 5 V6.6" fill="none" stroke="#1f1f1f" stroke-width="1.55" stroke-linejoin="round"/><path d="M4.6 6.6 H19.8 Q21.4 6.6 21 8.2 L19.2 16.4 Q18.8 18 17.2 18 H2.6 Q1 18 1.4 16.4 L3.2 8 Q3.6 6.6 4.6 6.6Z" fill="none" stroke="#1f1f1f" stroke-width="1.55" stroke-linejoin="round"/></svg>
<div class="t" style="left:118.2px;top:642.9px;height:30px;line-height:30px;font-size:18px;color:#1f1f1f;">用户数据类型</div>
<div class="a" style="left:47px;top:707px;width:274px;height:1px;background:#e3e6ea;"></div>
<svg class="a" style="left:69.0px;top:689.35px;" width="13" height="8.5" viewBox="0 0 13 8.5"><path d="M0.8 0.8 L6.5 6.8 L12.2 0.8" fill="none" stroke="#2970ff" stroke-width="1.45" stroke-linecap="round" stroke-linejoin="round"/></svg>
<svg class="a" style="left:91.8px;top:682.5px" width="21.3" height="17.9" viewBox="0 0 22 19" preserveAspectRatio="none"><path d="M1 15.5 V2.6 Q1 1 2.6 1 H7.2 Q8.2 1 8.8 1.8 L10 3.4 H16.6 Q18.2 3.4 18.2 5 V6.6" fill="none" stroke="#2970ff" stroke-width="1.55" stroke-linejoin="round"/><path d="M4.6 6.6 H19.8 Q21.4 6.6 21 8.2 L19.2 16.4 Q18.8 18 17.2 18 H2.6 Q1 18 1.4 16.4 L3.2 8 Q3.6 6.6 4.6 6.6Z" fill="none" stroke="#2970ff" stroke-width="1.55" stroke-linejoin="round"/></svg>
<div class="t" style="left:121.1px;top:677.9px;height:30px;line-height:30px;font-size:18px;color:#2970ff;">引用库</div>
<svg class="a" style="left:290.8px;top:678.9px;" width="25" height="25" viewBox="0 0 25 25"><rect x="9" y=".5" width="15.5" height="18" rx="1" fill="#0fd133"/><path d="M14.5 2.5 V7.5" stroke="#d8ffe0" stroke-width="1"/><rect x="17" y="3.2" width="1.6" height="4.6" fill="none" stroke="#b5f7c2" stroke-width=".9"/><rect x="20" y="3.2" width="1.8" height="4.6" fill="none" stroke="#b5f7c2" stroke-width=".9"/><path d="M16.5 10.5 h6 M16.5 13 h6 M16.5 15.5 h6" stroke="#7fee97" stroke-width="1.1" stroke-dasharray="1.3 .7"/><rect x="0" y="9.3" width="15.6" height="11.3" rx="2.6" fill="#0fd133" stroke="#f4fff6" stroke-width=".7"/><path d="M4.3 14.6 L7 17.4 L11.6 12.4" fill="none" stroke="#e6ffe9" stroke-width="1.2"/><rect x="5.2" y="20.5" width="5" height="4" fill="#0fd133"/><path d="M.5 22.6 H4 M11.5 22.6 H15" stroke="#0fd133" stroke-width="1.3"/></svg>
<div class="a" style="left:59px;top:741px;width:262px;height:1px;background:#e3e6ea;"></div>
<svg class="a" style="left:80.9px;top:723.55px;" width="13" height="8.5" viewBox="0 0 13 8.5"><path d="M0.8 0.8 L6.5 6.8 L12.2 0.8" fill="none" stroke="#2970ff" stroke-width="1.45" stroke-linecap="round" stroke-linejoin="round"/></svg>
<svg class="a" style="left:103.7px;top:716.7px" width="21.3" height="17.9" viewBox="0 0 22 19" preserveAspectRatio="none"><path d="M1 15.5 V2.6 Q1 1 2.6 1 H7.2 Q8.2 1 8.8 1.8 L10 3.4 H16.6 Q18.2 3.4 18.2 5 V6.6" fill="none" stroke="#2970ff" stroke-width="1.55" stroke-linejoin="round"/><path d="M4.6 6.6 H19.8 Q21.4 6.6 21 8.2 L19.2 16.4 Q18.8 18 17.2 18 H2.6 Q1 18 1.4 16.4 L3.2 8 Q3.6 6.6 4.6 6.6Z" fill="none" stroke="#2970ff" stroke-width="1.55" stroke-linejoin="round"/></svg>
<div class="t" style="left:133.0px;top:712.1px;height:30px;line-height:30px;font-size:18px;color:#2970ff;">系统库</div>
<svg class="a" style="left:290.8px;top:713.0999999999999px;" width="25" height="25" viewBox="0 0 25 25"><rect x="9" y=".5" width="15.5" height="18" rx="1" fill="#0fd133"/><path d="M14.5 2.5 V7.5" stroke="#d8ffe0" stroke-width="1"/><rect x="17" y="3.2" width="1.6" height="4.6" fill="none" stroke="#b5f7c2" stroke-width=".9"/><rect x="20" y="3.2" width="1.8" height="4.6" fill="none" stroke="#b5f7c2" stroke-width=".9"/><path d="M16.5 10.5 h6 M16.5 13 h6 M16.5 15.5 h6" stroke="#7fee97" stroke-width="1.1" stroke-dasharray="1.3 .7"/><rect x="0" y="9.3" width="15.6" height="11.3" rx="2.6" fill="#0fd133" stroke="#f4fff6" stroke-width=".7"/><path d="M4.3 14.6 L7 17.4 L11.6 12.4" fill="none" stroke="#e6ffe9" stroke-width="1.2"/><rect x="5.2" y="20.5" width="5" height="4" fill="#0fd133"/><path d="M.5 22.6 H4 M11.5 22.6 H15" stroke="#0fd133" stroke-width="1.3"/></svg>
<div class="a" style="left:71px;top:776px;width:250px;height:1px;background:#e3e6ea;"></div>
<svg class="a" style="left:92.7px;top:758.25px;" width="13" height="8.5" viewBox="0 0 13 8.5"><path d="M0.8 0.8 L6.5 6.8 L12.2 0.8" fill="none" stroke="#2970ff" stroke-width="1.45" stroke-linecap="round" stroke-linejoin="round"/></svg>
<svg class="a" style="left:115.5px;top:751.4px" width="21.3" height="17.9" viewBox="0 0 22 19" preserveAspectRatio="none"><path d="M1 15.5 V2.6 Q1 1 2.6 1 H7.2 Q8.2 1 8.8 1.8 L10 3.4 H16.6 Q18.2 3.4 18.2 5 V6.6" fill="none" stroke="#2970ff" stroke-width="1.55" stroke-linejoin="round"/><path d="M4.6 6.6 H19.8 Q21.4 6.6 21 8.2 L19.2 16.4 Q18.8 18 17.2 18 H2.6 Q1 18 1.4 16.4 L3.2 8 Q3.6 6.6 4.6 6.6Z" fill="none" stroke="#2970ff" stroke-width="1.55" stroke-linejoin="round"/></svg>
<div class="t" style="left:144.8px;top:746.8px;height:30px;line-height:30px;font-size:18px;color:#2970ff;">系统库初级指令</div>
<svg class="a" style="left:290.8px;top:747.8px;" width="25" height="25" viewBox="0 0 25 25"><rect x="9" y=".5" width="15.5" height="18" rx="1" fill="#0fd133"/><path d="M14.5 2.5 V7.5" stroke="#d8ffe0" stroke-width="1"/><rect x="17" y="3.2" width="1.6" height="4.6" fill="none" stroke="#b5f7c2" stroke-width=".9"/><rect x="20" y="3.2" width="1.8" height="4.6" fill="none" stroke="#b5f7c2" stroke-width=".9"/><path d="M16.5 10.5 h6 M16.5 13 h6 M16.5 15.5 h6" stroke="#7fee97" stroke-width="1.1" stroke-dasharray="1.3 .7"/><rect x="0" y="9.3" width="15.6" height="11.3" rx="2.6" fill="#0fd133" stroke="#f4fff6" stroke-width=".7"/><path d="M4.3 14.6 L7 17.4 L11.6 12.4" fill="none" stroke="#e6ffe9" stroke-width="1.2"/><rect x="5.2" y="20.5" width="5" height="4" fill="#0fd133"/><path d="M.5 22.6 H4 M11.5 22.6 H15" stroke="#0fd133" stroke-width="1.3"/></svg>
<div class="a" style="left:113px;top:810px;width:208px;height:1px;background:#e3e6ea;"></div>
<svg class="a" style="left:123.9px;top:783.8px;" width="22.5" height="21.5" viewBox="0 0 22.5 21.5"><ellipse cx="6" cy="3.2" rx="4.6" ry="2.2" fill="none" stroke="#1f1f1f" stroke-width="1.15"/><path d="M1.4 3.2 V8.8 Q1.4 11 6 11 Q10.6 11 10.6 8.8 V3.2 M1.4 6 Q1.4 8.2 6 8.2 Q10.6 8.2 10.6 6" fill="none" stroke="#1f1f1f" stroke-width="1.15"/><path d="M15.5 1 H20 Q21.3 1 21.3 2.3 V5.6" fill="none" stroke="#1f1f1f" stroke-width="1.15"/><path d="M1.4 15.5 V19.4 Q1.4 20.6 2.6 20.6 H6.5" fill="none" stroke="#1f1f1f" stroke-width="1.15"/><circle cx="17.2" cy="16.8" r="1.4" fill="none" stroke="#1f1f1f" stroke-width=".9"/><circle cx="17.2" cy="16.8" r="3.5" fill="none" stroke="#1f1f1f" stroke-width="1"/><circle cx="17.2" cy="16.8" r="4.5" fill="none" stroke="#1f1f1f" stroke-width="1.3" stroke-dasharray="1.6 1.93"/></svg>
<div class="t" style="left:153.8px;top:781.2px;height:30px;line-height:30px;font-size:18px;color:#1f1f1f;">布尔逻辑运算</div>
<div class="t" style="left:287.0px;top:780.7px;height:30px;line-height:30px;font-size:19.6px;color:#999;transform:scaleX(0.870);transform-origin:0 50%;">1.0</div>
<div class="a" style="left:113px;top:845px;width:208px;height:1px;background:#e3e6ea;"></div>
<svg class="a" style="left:123.9px;top:818.5px;" width="22.5" height="21.5" viewBox="0 0 22.5 21.5"><ellipse cx="6" cy="3.2" rx="4.6" ry="2.2" fill="none" stroke="#1f1f1f" stroke-width="1.15"/><path d="M1.4 3.2 V8.8 Q1.4 11 6 11 Q10.6 11 10.6 8.8 V3.2 M1.4 6 Q1.4 8.2 6 8.2 Q10.6 8.2 10.6 6" fill="none" stroke="#1f1f1f" stroke-width="1.15"/><path d="M15.5 1 H20 Q21.3 1 21.3 2.3 V5.6" fill="none" stroke="#1f1f1f" stroke-width="1.15"/><path d="M1.4 15.5 V19.4 Q1.4 20.6 2.6 20.6 H6.5" fill="none" stroke="#1f1f1f" stroke-width="1.15"/><circle cx="17.2" cy="16.8" r="1.4" fill="none" stroke="#1f1f1f" stroke-width=".9"/><circle cx="17.2" cy="16.8" r="3.5" fill="none" stroke="#1f1f1f" stroke-width="1"/><circle cx="17.2" cy="16.8" r="4.5" fill="none" stroke="#1f1f1f" stroke-width="1.3" stroke-dasharray="1.6 1.93"/></svg>
<div class="t" style="left:153.8px;top:815.9px;height:30px;line-height:30px;font-size:18px;color:#1f1f1f;">位逻辑运算</div>
<div class="t" style="left:282.4px;top:815.4px;height:30px;line-height:30px;font-size:19.6px;color:#999;transform:scaleX(0.870);transform-origin:0 50%;">1.0</div>
<div class="a" style="left:77px;top:879px;width:244px;height:1px;background:#e3e6ea;"></div>
<svg class="a" style="left:88.7px;top:854.5px" width="21.3" height="17.9" viewBox="0 0 22 19" preserveAspectRatio="none"><path d="M1 15.5 V2.6 Q1 1 2.6 1 H7.2 Q8.2 1 8.8 1.8 L10 3.4 H16.6 Q18.2 3.4 18.2 5 V6.6" fill="none" stroke="#1f1f1f" stroke-width="1.55" stroke-linejoin="round"/><path d="M4.6 6.6 H19.8 Q21.4 6.6 21 8.2 L19.2 16.4 Q18.8 18 17.2 18 H2.6 Q1 18 1.4 16.4 L3.2 8 Q3.6 6.6 4.6 6.6Z" fill="none" stroke="#1f1f1f" stroke-width="1.55" stroke-linejoin="round"/></svg>
<div class="t" style="left:118.2px;top:849.9px;height:30px;line-height:30px;font-size:18px;color:#1f1f1f;">工艺控制</div>
<div class="a" style="left:12px;top:914px;width:311.5px;height:1px;background:#e3e6ea;"></div>
<svg class="a" style="left:44.7px;top:896.15px;" width="13" height="8.5" viewBox="0 0 13 8.5"><path d="M0.8 0.8 L6.5 6.8 L12.2 0.8" fill="none" stroke="#2970ff" stroke-width="1.45" stroke-linecap="round" stroke-linejoin="round"/></svg>
<svg class="a" style="left:67.5px;top:889.3px" width="21.3" height="17.9" viewBox="0 0 22 19" preserveAspectRatio="none"><path d="M1 15.5 V2.6 Q1 1 2.6 1 H7.2 Q8.2 1 8.8 1.8 L10 3.4 H16.6 Q18.2 3.4 18.2 5 V6.6" fill="none" stroke="#2970ff" stroke-width="1.55" stroke-linejoin="round"/><path d="M4.6 6.6 H19.8 Q21.4 6.6 21 8.2 L19.2 16.4 Q18.8 18 17.2 18 H2.6 Q1 18 1.4 16.4 L3.2 8 Q3.6 6.6 4.6 6.6Z" fill="none" stroke="#2970ff" stroke-width="1.55" stroke-linejoin="round"/></svg>
<div class="t" style="left:96.80000000000001px;top:884.7px;height:30px;line-height:30px;font-size:18px;color:#2970ff;">调试</div>
<svg class="a" style="left:88.10000000000001px;top:920.5px;" width="22.5" height="22.5" viewBox="0 0 22.5 22.5"><circle cx="10" cy="10" r="8.6" fill="none" stroke="#1f1f1f" stroke-width="1.8"/><path d="M16.2 16.2 L21.8 21.8" stroke="#1f1f1f" stroke-width="2" stroke-linecap="round"/><path d="M0 10.5 H5.5 L8 6.5 L11.5 14 L14 9.5 H17" fill="none" stroke="#1f1f1f" stroke-width="1.6" stroke-linejoin="round" /></svg>
<div class="t" style="left:118.2px;top:918.1px;height:30px;line-height:30px;font-size:18px;color:#1f1f1f;">在线诊断</div>
<div class="a" style="left:77px;top:981px;width:244px;height:1px;background:#e3e6ea;"></div>
<svg class="a" style="left:88.7px;top:956.5px" width="21.3" height="17.9" viewBox="0 0 22 19" preserveAspectRatio="none"><path d="M1 15.5 V2.6 Q1 1 2.6 1 H7.2 Q8.2 1 8.8 1.8 L10 3.4 H16.6 Q18.2 3.4 18.2 5 V6.6" fill="none" stroke="#1f1f1f" stroke-width="1.55" stroke-linejoin="round"/><path d="M4.6 6.6 H19.8 Q21.4 6.6 21 8.2 L19.2 16.4 Q18.8 18 17.2 18 H2.6 Q1 18 1.4 16.4 L3.2 8 Q3.6 6.6 4.6 6.6Z" fill="none" stroke="#1f1f1f" stroke-width="1.55" stroke-linejoin="round"/></svg>
<div class="t" style="left:118.2px;top:951.9px;height:30px;line-height:30px;font-size:18px;color:#1f1f1f;">监控表</div>
<svg class="a" style="left:88.7px;top:989.2px;" width="23" height="22" viewBox="0 0 23 22"><path d="M8 20.5 H3 Q1 20.5 1 18.5 V3 Q1 1 3 1 H19 Q21 1 21 3 V9" fill="none" stroke="#1f1f1f" stroke-width="1.8"/><path d="M4.5 7.5 l1.5 1.5 l2.5 -3 M10.5 7 H17 M4.5 13 h2.5" fill="none" stroke="#1f1f1f" stroke-width="1.5"/><path d="M8.5 17 Q15 10 22 17 Q15 23.5 8.5 17Z" fill="#f8fbff" stroke="#1f1f1f" stroke-width="1.6"/><circle cx="15.2" cy="17" r="2.3" fill="none" stroke="#1f1f1f" stroke-width="1.4"/></svg>
<div class="t" style="left:118.2px;top:986.0px;height:30px;line-height:30px;font-size:18px;color:#1f1f1f;">任务监视</div>
<div class="a" style="left:12px;top:1049px;width:311.5px;height:1px;background:#e3e6ea;"></div>
<svg class="a" style="left:44.7px;top:1031.45px;" width="13" height="8.5" viewBox="0 0 13 8.5"><path d="M0.8 0.8 L6.5 6.8 L12.2 0.8" fill="none" stroke="#2970ff" stroke-width="1.45" stroke-linecap="round" stroke-linejoin="round"/></svg>
<svg class="a" style="left:67.5px;top:1024.6px" width="21.3" height="17.9" viewBox="0 0 22 19" preserveAspectRatio="none"><path d="M1 15.5 V2.6 Q1 1 2.6 1 H7.2 Q8.2 1 8.8 1.8 L10 3.4 H16.6 Q18.2 3.4 18.2 5 V6.6" fill="none" stroke="#2970ff" stroke-width="1.55" stroke-linejoin="round"/><path d="M4.6 6.6 H19.8 Q21.4 6.6 21 8.2 L19.2 16.4 Q18.8 18 17.2 18 H2.6 Q1 18 1.4 16.4 L3.2 8 Q3.6 6.6 4.6 6.6Z" fill="none" stroke="#2970ff" stroke-width="1.55" stroke-linejoin="round"/></svg>
<div class="t" style="left:96.80000000000001px;top:1020.0px;height:30px;line-height:30px;font-size:18px;color:#2970ff;">硬件</div>
<svg class="a" style="left:266px;top:1024.2px;" width="20" height="20" viewBox="0 0 20 20"><circle cx="10" cy="10" r="8.4" fill="#bed5fb" stroke="#1a6cf0" stroke-width="1.7"/><path d="M5.6 10.2 L8.7 13 L14.2 7.2" fill="none" stroke="#1a6cf0" stroke-width="1.7" stroke-linejoin="round"/></svg>
<svg class="a" style="left:290.8px;top:1021.0px;" width="25" height="25" viewBox="0 0 25 25"><rect x="9" y=".5" width="15.5" height="18" rx="1" fill="#0fd133"/><path d="M14.5 2.5 V7.5" stroke="#d8ffe0" stroke-width="1"/><rect x="17" y="3.2" width="1.6" height="4.6" fill="none" stroke="#b5f7c2" stroke-width=".9"/><rect x="20" y="3.2" width="1.8" height="4.6" fill="none" stroke="#b5f7c2" stroke-width=".9"/><path d="M16.5 10.5 h6 M16.5 13 h6 M16.5 15.5 h6" stroke="#7fee97" stroke-width="1.1" stroke-dasharray="1.3 .7"/><rect x="0" y="9.3" width="15.6" height="11.3" rx="2.6" fill="#0fd133" stroke="#f4fff6" stroke-width=".7"/><path d="M4.3 14.6 L7 17.4 L11.6 12.4" fill="none" stroke="#e6ffe9" stroke-width="1.2"/><rect x="5.2" y="20.5" width="5" height="4" fill="#0fd133"/><path d="M.5 22.6 H4 M11.5 22.6 H15" stroke="#0fd133" stroke-width="1.3"/></svg>
<svg class="a" style="left:88.7px;top:1061.9px;" width="22" height="11" viewBox="0 0 22 11"><rect x=".7" y=".7" width="20.2" height="8.8" fill="#fff" stroke="#1f1f1f" stroke-width="1.3"/><path d="M4.5 3.3 V7 M7.2 3.3 V7" stroke="#1f1f1f" stroke-width="1"/><circle cx="11.3" cy="5.1" r="1.6" fill="none" stroke="#1f1f1f" stroke-width=".9"/><circle cx="16.3" cy="5.1" r="1.6" fill="none" stroke="#1f1f1f" stroke-width=".9"/></svg>
<div class="t" style="left:118.2px;top:1053.2px;height:30px;line-height:30px;font-size:18px;color:#1f1f1f;">设备组态</div>
<div class="a" style="left:47px;top:1116px;width:274px;height:1px;background:#e3e6ea;"></div>
<svg class="a" style="left:69.0px;top:1098.25px;" width="13" height="8.5" viewBox="0 0 13 8.5"><path d="M0.8 0.8 L6.5 6.8 L12.2 0.8" fill="none" stroke="#2970ff" stroke-width="1.45" stroke-linecap="round" stroke-linejoin="round"/></svg>
<svg class="a" style="left:91.8px;top:1091.4px" width="21.3" height="17.9" viewBox="0 0 22 19" preserveAspectRatio="none"><path d="M1 15.5 V2.6 Q1 1 2.6 1 H7.2 Q8.2 1 8.8 1.8 L10 3.4 H16.6 Q18.2 3.4 18.2 5 V6.6" fill="none" stroke="#2970ff" stroke-width="1.55" stroke-linejoin="round"/><path d="M4.6 6.6 H19.8 Q21.4 6.6 21 8.2 L19.2 16.4 Q18.8 18 17.2 18 H2.6 Q1 18 1.4 16.4 L3.2 8 Q3.6 6.6 4.6 6.6Z" fill="none" stroke="#2970ff" stroke-width="1.55" stroke-linejoin="round"/></svg>
<div class="t" style="left:121.1px;top:1086.8px;height:30px;line-height:30px;font-size:18px;color:#2970ff;">本地配置</div>
<svg class="a" style="left:266px;top:1091.0px;" width="20" height="20" viewBox="0 0 20 20"><circle cx="10" cy="10" r="8.4" fill="#bed5fb" stroke="#1a6cf0" stroke-width="1.7"/><path d="M5.6 10.2 L8.7 13 L14.2 7.2" fill="none" stroke="#1a6cf0" stroke-width="1.7" stroke-linejoin="round"/></svg>
<svg class="a" style="left:290.8px;top:1087.8px;" width="25" height="25" viewBox="0 0 25 25"><rect x="9" y=".5" width="15.5" height="18" rx="1" fill="#0fd133"/><path d="M14.5 2.5 V7.5" stroke="#d8ffe0" stroke-width="1"/><rect x="17" y="3.2" width="1.6" height="4.6" fill="none" stroke="#b5f7c2" stroke-width=".9"/><rect x="20" y="3.2" width="1.8" height="4.6" fill="none" stroke="#b5f7c2" stroke-width=".9"/><path d="M16.5 10.5 h6 M16.5 13 h6 M16.5 15.5 h6" stroke="#7fee97" stroke-width="1.1" stroke-dasharray="1.3 .7"/><rect x="0" y="9.3" width="15.6" height="11.3" rx="2.6" fill="#0fd133" stroke="#f4fff6" stroke-width=".7"/><path d="M4.3 14.6 L7 17.4 L11.6 12.4" fill="none" stroke="#e6ffe9" stroke-width="1.2"/><rect x="5.2" y="20.5" width="5" height="4" fill="#0fd133"/><path d="M.5 22.6 H4 M11.5 22.6 H15" stroke="#0fd133" stroke-width="1.3"/></svg>
<div class="a" style="left:89px;top:1150px;width:232px;height:1px;background:#e3e6ea;"></div>
<svg class="a" style="left:102px;top:1124.4px;" width="20" height="22" viewBox="0 0 20 22"><rect x="1" y="1" width="17.5" height="20" rx="1.5" fill="none" stroke="#1f1f1f" stroke-width="1.6"/><path d="M7.5 1 V21 M14 1 V21" stroke="#1f1f1f" stroke-width="1.3"/><rect x="3" y="3.5" width="3" height="3" fill="#1f1f1f"/><rect x="3" y="8.5" width="3" height="3" fill="#1f1f1f"/><path d="M10.5 4 v1.6 M10.5 7.5 v1.6 M10.5 11 v1.6 M10.5 14.5 v1.6" stroke="#1f1f1f" stroke-width="1.6"/><path d="M16.2 4 V18" stroke="#999" stroke-width="1.4" stroke-dasharray="2 1.2"/></svg>
<div class="t" style="left:129.6px;top:1120.7px;height:30px;line-height:30px;font-size:19.6px;color:#1f1f1f;transform:scaleX(0.936);transform-origin:0 50%;">0 T324-XP-C...</div>
<svg class="a" style="left:266px;top:1125.4px;" width="20" height="20" viewBox="0 0 20 20"><circle cx="10" cy="10" r="8.4" fill="#bed5fb" stroke="#1a6cf0" stroke-width="1.7"/><path d="M5.6 10.2 L8.7 13 L14.2 7.2" fill="none" stroke="#1a6cf0" stroke-width="1.7" stroke-linejoin="round"/></svg>
<div class="a" style="left:77px;top:1185px;width:244px;height:1px;background:#e3e6ea;"></div>
<svg class="a" style="left:88.7px;top:1160.6px" width="21.3" height="17.9" viewBox="0 0 22 19" preserveAspectRatio="none"><path d="M1 15.5 V2.6 Q1 1 2.6 1 H7.2 Q8.2 1 8.8 1.8 L10 3.4 H16.6 Q18.2 3.4 18.2 5 V6.6" fill="none" stroke="#1f1f1f" stroke-width="1.55" stroke-linejoin="round"/><path d="M4.6 6.6 H19.8 Q21.4 6.6 21 8.2 L19.2 16.4 Q18.8 18 17.2 18 H2.6 Q1 18 1.4 16.4 L3.2 8 Q3.6 6.6 4.6 6.6Z" fill="none" stroke="#1f1f1f" stroke-width="1.55" stroke-linejoin="round"/></svg>
<div class="t" style="left:118.2px;top:1156.0px;height:30px;line-height:30px;font-size:18px;color:#1f1f1f;">远程配置</div>
<div class="a" style="left:332.3px;top:148px;width:2332px;height:48px;background:#deeafd;"></div>
<div class="a" style="left:331.5px;top:193px;width:158.5px;height:3px;background:#ead7cf;"></div>
<div class="a" style="left:490px;top:193px;width:148px;height:3px;background:#f5821f;"></div>
<svg class="a" style="left:345px;top:167px;" width="19" height="10" viewBox="0 0 19 10"><rect x=".7" y=".7" width="17.6" height="8.6" fill="none" stroke="#a8a8a8" stroke-width="1.3"/><path d="M4 3 V7 M6.3 3 V7" stroke="#a8a8a8" stroke-width="1"/><circle cx="10" cy="5" r="1.5" fill="none" stroke="#a8a8a8" stroke-width=".9"/><circle cx="14.3" cy="5" r="1.5" fill="none" stroke="#a8a8a8" stroke-width=".9"/></svg>
<div class="t" style="left:377.5px;top:157.0px;height:30px;line-height:30px;font-size:17.4px;color:#8c8c8c;">PLC_1</div>
<svg class="a" style="left:503.5px;top:166px;" width="19" height="14" viewBox="0 0 19 14"><path d="M5 2.5 L1.2 7 L5 11.5 M14 2.5 L17.8 7 L14 11.5 M11 .8 L8 13.2" fill="none" stroke="#222" stroke-width="1.5" stroke-linecap="round" stroke-linejoin="round"/></svg>
<div class="t" style="left:536px;top:157.0px;height:30px;line-height:30px;font-size:17.4px;color:#141414;">PU_1</div>
<svg class="a" style="left:615.5px;top:166.3px;" width="9" height="9" viewBox="0 0 9 9"><path d="M.7 .7 L8.3 8.3 M8.3 .7 L.7 8.3" stroke="#333" stroke-width="1.3"/></svg>
<div class="a" style="left:332.3px;top:196px;width:2332px;height:57px;background:#eaf1fe;"></div>
<svg class="a" style="left:352px;top:213px;opacity:1;" width="24" height="24" viewBox="0 0 24 24"><path d="M12 0 V24 M0 12 H24" stroke="#b3cdfb" stroke-width="3.8"/></svg>
<svg class="a" style="left:403px;top:213px;opacity:1;" width="24" height="24" viewBox="0 0 24 24"><path d="M12 24 V3 M3.2 11.8 L12 3 L20.8 11.8" fill="none" stroke="#b3cdfb" stroke-width="3.6"/></svg>
<svg class="a" style="left:454px;top:213px;opacity:1;" width="24" height="24" viewBox="0 0 24 24"><path d="M12 0 V21 M3.2 12.2 L12 21 L20.8 12.2" fill="none" stroke="#b3cdfb" stroke-width="3.6"/></svg>
<svg class="a" style="left:505px;top:213px;opacity:1;" width="24" height="24" viewBox="0 0 24 24"><path d="M13 1.4 H5 Q1.4 1.4 1.4 5 V19 Q1.4 22.6 5 22.6 H19 Q22.6 22.6 22.6 19 V11.7" fill="none" stroke="#0d63e0" stroke-width="2.7"/><path d="M6.5 8 L9.5 17 L19 14.2 L15.2 12.4 Q15.5 6 23 1 Q13.5 2.5 10.8 9.8Z" fill="#0d63e0"/></svg>
<svg class="a" style="left:556px;top:213px;opacity:1;" width="24" height="24" viewBox="0 0 24 24"><path d="M13.5 1.4 H5 Q1.4 1.4 1.4 5 V19 Q1.4 22.6 5 22.6 H19 Q22.6 22.6 22.6 19 V15.4" fill="none" stroke="#0d63e0" stroke-width="2.7"/><path d="M15 .6 L24 2 L22.5 11 L20 8 Q13 9.5 8.3 16.5 Q8.6 8 16.8 3.8Z" fill="#0d63e0"/></svg>
<svg class="a" style="left:607.2px;top:213px;opacity:1;" width="24" height="24" viewBox="0 0 24 24"><path d="M20.3 9 A10 10 0 1 0 11 21.3" fill="none" stroke="#dde4f1" stroke-width="1.5"/><path d="M16 1 V6.5 H21.5" fill="none" stroke="#dde4f1" stroke-width="1.5"/><path d="M10.5 7 V12" stroke="#dde4f1" stroke-width="1.5"/><path d="M15 13 L24 18.5 L15 24Z" fill="#dde4f1"/></svg>
<div class="a" style="left:660px;top:214px;width:1.3px;height:21px;background:#b4c8ee;"></div>
<svg class="a" style="left:689px;top:213px;opacity:1;" width="24" height="24" viewBox="0 0 24 24"><rect x="0" y="0" width="24" height="5.7" fill="#2573f5"/><path d="M1.5 8.5 V16 M1.5 15.5 H11.5 M0 22.9 H10" stroke="#2573f5" stroke-width="1.4" fill="none"/><path d="M17.8 11.3 V23.3 M11.8 17.3 H23.8" stroke="#2573f5" stroke-width="3.2"/></svg>
<svg class="a" style="left:740.2px;top:213px;opacity:1;" width="24" height="24" viewBox="0 0 24 24"><rect x="0" y="0" width="24" height="5.7" fill="#2573f5"/><path d="M1.5 8.5 V16 M1.5 15.5 H11.5 M0 22.9 H10" stroke="#2573f5" stroke-width="1.4" fill="none"/><path d="M12.4 17.5 H24" stroke="#2573f5" stroke-width="2.6"/></svg>
<svg class="a" style="left:791.2px;top:213px;opacity:1;" width="24" height="24" viewBox="0 0 24 24"><rect x="0" y="0" width="24" height="5.7" fill="#2573f5"/><rect x="0" y="8.6" width="24" height="5.7" fill="#2573f5"/><rect x="0" y="17.5" width="24" height="6.1" fill="#2573f5"/></svg>
<svg class="a" style="left:842.2px;top:213px;opacity:1;" width="24" height="24" viewBox="0 0 24 24"><path d="M12 1 C5.5 1 1 4.7 1 9.4 C1 12.4 3 15 6.4 16.5 L5.2 22.8 L10.6 17.7 C11 17.8 11.5 17.8 12 17.8 C18.5 17.8 23 14.1 23 9.4 C23 4.7 18.5 1 12 1Z" fill="none" stroke="#2573f5" stroke-width="1.7" stroke-linejoin="round"/><circle cx="7" cy="9.6" r="1.4" fill="#2573f5"/><circle cx="12" cy="9.6" r="1.4" fill="#2573f5"/><circle cx="17" cy="9.6" r="1.4" fill="#2573f5"/></svg>
<svg class="a" style="left:893px;top:213px;opacity:1;" width="24" height="24" viewBox="0 0 24 24"><path d="M12 1.2 L15.3 8.3 L23 9.3 L17.3 14.6 L18.8 22.4 L12 18.6 L5.2 22.4 L6.7 14.6 L1 9.3 L8.7 8.3Z" fill="none" stroke="#2573f5" stroke-width="1.9" stroke-linejoin="round"/></svg>
<div class="a" style="left:938px;top:207.3px;width:36px;height:35.7px;background:#bdd5fc;"></div>
<svg class="a" style="left:944px;top:213px;opacity:1;" width="24" height="24" viewBox="0 0 24 24"><circle cx="5.6" cy="14.4" r="4.8" fill="none" stroke="#2573f5" stroke-width="1.6"/><circle cx="18.4" cy="14.4" r="4.8" fill="none" stroke="#2573f5" stroke-width="1.6"/><path d="M.8 12.5 Q1.6 7.2 5.2 7.2 H18.8 Q22.4 7.2 23.2 12.5 M9.8 11.3 Q12 9.9 14.2 11.3 M10.2 14.4 H13.8" fill="none" stroke="#2573f5" stroke-width="1.5"/><path d="M3.6 7 Q4.2 4.3 7 4.3 Q9.8 4.3 10.4 7 M13.6 7 Q14.2 4.3 17 4.3 Q19.8 4.3 20.4 7" fill="#2573f5" stroke="#2573f5" stroke-width="1.2"/></svg>
<svg class="a" style="left:995.2px;top:213px;opacity:1;" width="24" height="24" viewBox="0 0 24 24"><path d="M9.4 .7 H14.6 V9 H18.3 L12 16.2 L5.7 9 H9.4Z" fill="none" stroke="#bdd3fb" stroke-width="1.4"/><path d="M6.5 12.3 H.7 V23.3 H23.3 V12.3 H17.5" fill="none" stroke="#bdd3fb" stroke-width="1.4"/><path d="M4.7 16.5 V21 M7.7 16.5 V21" stroke="#bdd3fb" stroke-width="1.3"/><path d="M11.3 20.3 Q13 20.8 14.3 18.8" stroke="#bdd3fb" stroke-width="1.3" fill="none"/><circle cx="18.6" cy="18.8" r="2" fill="none" stroke="#bdd3fb" stroke-width="1.3"/></svg>
<svg class="a" style="left:1047px;top:212.6px;" width="24" height="24" viewBox="0 0 24 24"><circle cx="9.4" cy="9.4" r="8.3" fill="none" stroke="#2573f5" stroke-width="1.7"/><path d="M15.6 15.3 L21.2 20.6" stroke="#2573f5" stroke-width="2.8" stroke-linecap="round"/><path d="M4.6 8.6 A5 5 0 0 1 8.4 4.7" fill="none" stroke="#2573f5" stroke-width="1.3"/></svg>
<div class="a" style="left:332.5px;top:253px;width:2332px;height:36px;background:#f4f8fe;"></div>
<svg class="a" style="left:370.5px;top:256.5px;" width="27" height="27" viewBox="0 0 27 27"><path d="M26.5 0 V26.5 H0Z" fill="#c9dcfa"/></svg>
<div class="a" style="left:401px;top:253px;width:1px;height:36px;background:#d3e2fb;"></div>
<div class="a" style="left:861px;top:253px;width:1px;height:36px;background:#d3e2fb;"></div>
<div class="a" style="left:1177px;top:253px;width:1px;height:36px;background:#d3e2fb;"></div>
<div class="a" style="left:1476px;top:253px;width:1px;height:36px;background:#d3e2fb;"></div>
<div class="a" style="left:1547px;top:253px;width:1px;height:36px;background:#d3e2fb;"></div>
<div class="a" style="left:1869px;top:253px;width:1px;height:36px;background:#d3e2fb;"></div>
<div class="a" style="left:2192px;top:253px;width:1px;height:36px;background:#d3e2fb;"></div>
<div class="a" style="left:2514px;top:253px;width:1px;height:36px;background:#d3e2fb;"></div>
<div class="t" style="left:450.4px;top:257.0px;height:30px;line-height:30px;font-size:18px;color:#262626;">名称</div>
<div class="t" style="left:877px;top:257.0px;height:30px;line-height:30px;font-size:18px;color:#262626;">数据类型</div>
<div class="t" style="left:1194.7px;top:257.0px;height:30px;line-height:30px;font-size:18px;color:#262626;">初始值</div>
<div class="t" style="left:1494.6px;top:257.0px;height:30px;line-height:30px;font-size:18px;color:#262626;">保持</div>
<div class="t" style="left:1564.4px;top:257.0px;height:30px;line-height:30px;font-size:18px;color:#262626;">显示格式</div>
<div class="t" style="left:1886.5px;top:257.0px;height:30px;line-height:30px;font-size:18px;color:#262626;">实际值</div>
<div class="t" style="left:2209.3px;top:257.0px;height:30px;line-height:30px;font-size:18px;color:#262626;">修改值</div>
<div class="t" style="left:2531.8px;top:257.0px;height:30px;line-height:30px;font-size:18px;color:#262626;">描述</div>
<div class="a" style="left:332.5px;top:289px;width:2332px;height:36px;background:#f5f9fe;"></div>
<div class="a" style="left:332.5px;top:325px;width:2332px;height:36px;background:#fefeff;"></div>
<div class="a" style="left:332.5px;top:361px;width:2332px;height:36px;background:#f5f9fe;"></div>
<div class="a" style="left:332.5px;top:397px;width:2332px;height:36px;background:#fefeff;"></div>
<div class="a" style="left:332.5px;top:433px;width:2332px;height:36px;background:#f5f9fe;"></div>
<div class="a" style="left:332.5px;top:469px;width:2332px;height:36px;background:#fefeff;"></div>
<div class="a" style="left:332.5px;top:505px;width:2332px;height:36px;background:#f5f9fe;"></div>
<div class="a" style="left:332.5px;top:541px;width:2332px;height:36px;background:#fefeff;"></div>
<div class="a" style="left:332.5px;top:577px;width:2332px;height:36px;background:#f5f9fe;"></div>
<div class="a" style="left:332.5px;top:613px;width:2332px;height:36px;background:#fefeff;"></div>
<div class="a" style="left:401px;top:289px;width:1px;height:360px;background:#d0e1fb;"></div>
<div class="a" style="left:857px;top:289px;width:1px;height:360px;background:#d0e1fb;"></div>
<div class="a" style="left:1174px;top:289px;width:1px;height:360px;background:#d0e1fb;"></div>
<div class="a" style="left:1472px;top:289px;width:1px;height:360px;background:#d0e1fb;"></div>
<div class="a" style="left:1543px;top:289px;width:1px;height:360px;background:#d0e1fb;"></div>
<div class="a" style="left:1864px;top:289px;width:1px;height:360px;background:#d0e1fb;"></div>
<div class="a" style="left:2186px;top:289px;width:1px;height:360px;background:#d0e1fb;"></div>
<div class="a" style="left:2507px;top:289px;width:1px;height:360px;background:#d0e1fb;"></div>
<svg class="a" style="left:420.0px;top:304.25px;" width="11" height="7.5" viewBox="0 0 11 7.5"><path d="M0.8 0.8 L5.5 5.8 L10.2 0.8" fill="none" stroke="#1a6cf0" stroke-width="1.9" stroke-linecap="round" stroke-linejoin="round"/></svg>
<div class="t" style="left:447px;top:292.0px;height:30px;line-height:30px;font-size:19.6px;color:#2970ff;transform:scaleX(0.896);transform-origin:0 50%;">VAR</div>
<div class="t" style="left:380px;top:328.0px;height:30px;line-height:30px;font-size:19.2px;color:#222;width:18px;text-align:right;">1</div>
<div class="a" style="left:447px;top:340px;width:6px;height:6px;background:#8ab4f8;border-radius:3px"></div>
<div class="t" style="left:474.7px;top:328.0px;height:30px;line-height:30px;font-size:19.2px;color:#8a8a8a;">IN1</div>
<div class="t" style="left:875px;top:328.0px;height:30px;line-height:30px;font-size:19.2px;color:#8a8a8a;">BOOL</div>
<div class="t" style="left:1191.8px;top:328.0px;height:30px;line-height:30px;font-size:19.2px;color:#cfcfcf;">FALSE</div>
<div class="a" style="left:1499px;top:334px;width:16px;height:16px;background:#e9e9e9;border:1px solid #d2d2d2;border-radius:4.5px"></div>
<div class="t" style="left:1564.4px;top:325.0px;height:30px;line-height:30px;font-size:18px;color:#2b2b2b;">布尔量</div>
<svg class="a" style="left:1817.3px;top:332.2px;" width="14" height="9" viewBox="0 0 14 9"><path d="M1 1.2 L7 7.2 L13 1.2" fill="none" stroke="#222" stroke-width="2"/></svg>
<div class="t" style="left:1882.3px;top:328.0px;height:30px;line-height:30px;font-size:19.6px;color:#2b2b2b;transform:scaleX(0.838);transform-origin:0 50%;">TRUE</div>
<div class="t" style="left:380px;top:364.0px;height:30px;line-height:30px;font-size:19.2px;color:#222;width:18px;text-align:right;">2</div>
<div class="a" style="left:447px;top:376px;width:6px;height:6px;background:#8ab4f8;border-radius:3px"></div>
<div class="t" style="left:474.7px;top:364.0px;height:30px;line-height:30px;font-size:19.2px;color:#8a8a8a;">IN2</div>
<div class="t" style="left:875px;top:364.0px;height:30px;line-height:30px;font-size:19.2px;color:#8a8a8a;">BOOL</div>
<div class="t" style="left:1191.8px;top:364.0px;height:30px;line-height:30px;font-size:19.2px;color:#cfcfcf;">FALSE</div>
<div class="a" style="left:1499px;top:370px;width:16px;height:16px;background:#e9e9e9;border:1px solid #d2d2d2;border-radius:4.5px"></div>
<div class="t" style="left:1564.4px;top:361.0px;height:30px;line-height:30px;font-size:18px;color:#2b2b2b;">布尔量</div>
<svg class="a" style="left:1817.3px;top:368.2px;" width="14" height="9" viewBox="0 0 14 9"><path d="M1 1.2 L7 7.2 L13 1.2" fill="none" stroke="#222" stroke-width="2"/></svg>
<div class="t" style="left:1882.3px;top:364.0px;height:30px;line-height:30px;font-size:19.6px;color:#2b2b2b;transform:scaleX(0.838);transform-origin:0 50%;">TRUE</div>
<div class="t" style="left:380px;top:400.0px;height:30px;line-height:30px;font-size:19.2px;color:#222;width:18px;text-align:right;">3</div>
<div class="a" style="left:447px;top:412px;width:6px;height:6px;background:#8ab4f8;border-radius:3px"></div>
<div class="t" style="left:474.7px;top:400.0px;height:30px;line-height:30px;font-size:19.2px;color:#8a8a8a;">OUT</div>
<div class="t" style="left:875px;top:400.0px;height:30px;line-height:30px;font-size:19.2px;color:#8a8a8a;">BOOL</div>
<div class="t" style="left:1191.8px;top:400.0px;height:30px;line-height:30px;font-size:19.2px;color:#cfcfcf;">FALSE</div>
<div class="a" style="left:1499px;top:406px;width:16px;height:16px;background:#e9e9e9;border:1px solid #d2d2d2;border-radius:4.5px"></div>
<div class="t" style="left:1564.4px;top:397.0px;height:30px;line-height:30px;font-size:18px;color:#2b2b2b;">布尔量</div>
<svg class="a" style="left:1817.3px;top:404.2px;" width="14" height="9" viewBox="0 0 14 9"><path d="M1 1.2 L7 7.2 L13 1.2" fill="none" stroke="#222" stroke-width="2"/></svg>
<div class="t" style="left:1882.3px;top:400.0px;height:30px;line-height:30px;font-size:19.6px;color:#2b2b2b;transform:scaleX(0.838);transform-origin:0 50%;">TRUE</div>
<div class="t" style="left:380px;top:436.0px;height:30px;line-height:30px;font-size:19.2px;color:#222;width:18px;text-align:right;">4</div>
<div class="a" style="left:447px;top:448px;width:6px;height:6px;background:#8ab4f8;border-radius:3px"></div>
<div class="t" style="left:474.7px;top:436.0px;height:30px;line-height:30px;font-size:19.2px;color:#8a8a8a;">OUT2</div>
<div class="t" style="left:875px;top:436.0px;height:30px;line-height:30px;font-size:19.2px;color:#8a8a8a;">BOOL</div>
<div class="t" style="left:1191.8px;top:436.0px;height:30px;line-height:30px;font-size:19.2px;color:#cfcfcf;">FALSE</div>
<div class="a" style="left:1499px;top:442px;width:16px;height:16px;background:#e9e9e9;border:1px solid #d2d2d2;border-radius:4.5px"></div>
<div class="t" style="left:1564.4px;top:433.0px;height:30px;line-height:30px;font-size:18px;color:#2b2b2b;">布尔量</div>
<svg class="a" style="left:1817.3px;top:440.2px;" width="14" height="9" viewBox="0 0 14 9"><path d="M1 1.2 L7 7.2 L13 1.2" fill="none" stroke="#222" stroke-width="2"/></svg>
<div class="t" style="left:1882.3px;top:436.0px;height:30px;line-height:30px;font-size:19.6px;color:#2b2b2b;transform:scaleX(0.810);transform-origin:0 50%;">FALSE</div>
<div class="t" style="left:380px;top:472.0px;height:30px;line-height:30px;font-size:19.2px;color:#8f8f8f;width:18px;text-align:right;">5</div>
<div class="a" style="left:447px;top:484px;width:6px;height:6px;background:#c5d9fb;border-radius:3px"></div>
<div class="t" style="left:474.2px;top:472.5px;height:30px;line-height:30px;font-size:19.6px;color:#b8b8b8;">添加</div>
<svg class="a" style="left:420.0px;top:520.25px;" width="11" height="7.5" viewBox="0 0 11 7.5"><path d="M0.8 0.8 L5.5 5.8 L10.2 0.8" fill="none" stroke="#1a6cf0" stroke-width="1.9" stroke-linecap="round" stroke-linejoin="round"/></svg>
<div class="t" style="left:447px;top:508.0px;height:30px;line-height:30px;font-size:19.6px;color:#2970ff;transform:scaleX(0.887);transform-origin:0 50%;">TEMP</div>
<div class="t" style="left:380px;top:544.0px;height:30px;line-height:30px;font-size:19.2px;color:#8f8f8f;width:18px;text-align:right;">1</div>
<div class="a" style="left:447px;top:556px;width:6px;height:6px;background:#c5d9fb;border-radius:3px"></div>
<div class="t" style="left:474.2px;top:544.5px;height:30px;line-height:30px;font-size:19.6px;color:#b8b8b8;">添加</div>
<svg class="a" style="left:420.0px;top:592.25px;" width="11" height="7.5" viewBox="0 0 11 7.5"><path d="M0.8 0.8 L5.5 5.8 L10.2 0.8" fill="none" stroke="#1a6cf0" stroke-width="1.9" stroke-linecap="round" stroke-linejoin="round"/></svg>
<div class="t" style="left:447px;top:580.0px;height:30px;line-height:30px;font-size:19.6px;color:#2970ff;transform:scaleX(0.911);transform-origin:0 50%;">LOCAL CONSTANT</div>
<div class="t" style="left:380px;top:616.0px;height:30px;line-height:30px;font-size:19.2px;color:#8f8f8f;width:18px;text-align:right;">1</div>
<div class="a" style="left:447px;top:628px;width:6px;height:6px;background:#c5d9fb;border-radius:3px"></div>
<div class="t" style="left:474.2px;top:616.5px;height:30px;line-height:30px;font-size:19.6px;color:#b8b8b8;">添加</div>
<div class="a" style="left:332.5px;top:842px;width:2332px;height:6.5px;background:#9fc3f9;"></div>
<div class="a" style="left:332.5px;top:848.5px;width:34.5px;height:231.5px;background:#f4f7fe;"></div>
<div class="a" style="left:366.3px;top:848.5px;width:1.2px;height:231.5px;background:#dde7fb;"></div>
<div class="a" style="left:367.5px;top:848.5px;width:2297px;height:35.3px;background:#f7f7f6;"></div>
<div class="a" style="left:406.5px;top:851.5px;width:268.5px;height:29px;background:#fafafa;border-radius:5px"></div>
<svg class="a" style="left:378.0px;top:862.75px;" width="11" height="7.5" viewBox="0 0 11 7.5"><path d="M0.8 0.8 L5.5 5.8 L10.2 0.8" fill="none" stroke="#333" stroke-width="1.7" stroke-linecap="round" stroke-linejoin="round"/></svg>
<div class="t" style="left:409px;top:849.5px;height:30px;line-height:30px;font-size:18.4px;color:#2970ff;">程序段&nbsp;<span style="font-family:'DejaVu Sans Mono',monospace;font-size:17px;margin-left:4px">1</span></div>
<div class="a" style="left:332.5px;top:1079.5px;width:2332px;height:1.5px;background:#dcdcdc;"></div>
<div class="m" style="left:343.5px;top:950px;height:30px;line-height:30px;font-size:17px;font-weight:bold;color:#111">1</div>
<svg class="a" style="left:333px;top:848px;" width="1000" height="240" viewBox="0 0 1000 240">
<path d="M108.7 65 V203.5" stroke="#3ecf9b" stroke-width="2"/>
<path d="M108.7 142.3 H234 M260 142.3 H418" stroke="#3ecf9b" stroke-width="2"/>
<path d="M234.8 128.8 V156 M258.9 128.8 V156" stroke="#3ecf9b" stroke-width="2.2"/>
<rect x="205.5" y="72" width="84.2" height="23.7" fill="#e9f3ee"/>
<rect x="418.3" y="100.5" width="120" height="60" fill="#f5f7fe"/>
<rect x="418.3" y="100.5" width="120" height="23.5" fill="#dfe9fd"/>
<rect x="418.3" y="100.5" width="120" height="60" fill="none" stroke="#3ecf9b" stroke-width="1.7"/>
<path d="M539 142.3 H721 M757 142.3 H875.8" stroke="#bdbdbd" stroke-width="2"/>
<path d="M875.8 133 V151.5" stroke="#bdbdbd" stroke-width="1.6"/>
<path d="M726.5 129 Q716.5 142.5 726.5 156 M751 129 Q761 142.5 751 156" fill="none" stroke="#bdbdbd" stroke-width="2"/>
<rect x="697.4" y="72" width="84" height="23.7" fill="#e8effc"/>
</svg>
<div class="t" style="left:560.2px;top:917.0px;height:30px;line-height:30px;font-size:17.6px;color:#3cc65a;transform:scaleX(0.847);transform-origin:0 50%;">TRUE</div>
<div class="m" style="left:430.0px;top:941.0px;width:300px;text-align:center;height:30px;line-height:30px;font-size:17px;color:#111;font-weight:normal;">IN1</div>
<div class="m" style="left:661.0px;top:910.5px;width:300px;text-align:center;height:30px;line-height:30px;font-size:17px;color:#111;font-weight:normal;">R_TRIG_1</div>
<div class="m" style="left:661.0px;top:945.5px;width:300px;text-align:center;height:30px;line-height:30px;font-size:17px;color:#111;font-weight:normal;">R_TRIG</div>
<div class="m" style="left:756.0px;top:974.5px;width:300px;text-align:left;height:30px;line-height:30px;font-size:17px;color:#111;font-weight:normal;">CLK</div>
<div class="m" style="left:567.5px;top:974.5px;width:300px;text-align:right;height:30px;line-height:30px;font-size:17px;color:#111;font-weight:normal;">Q</div>
<div class="t" style="left:1046.3px;top:917.0px;height:30px;line-height:30px;font-size:17.6px;color:#222;transform:scaleX(0.949);transform-origin:0 50%;">FALSE</div>
<div class="m" style="left:922.0px;top:941.0px;width:300px;text-align:center;height:30px;line-height:30px;font-size:17px;color:#111;font-weight:normal;">OUT2</div>
<div class="a" style="left:332.5px;top:1394.5px;width:2332px;height:42.5px;background:#fafafa;"></div>
<svg class="a" style="left:349px;top:1410px;" width="16" height="11.5" viewBox="0 0 16 11.5"><path d="M8 .8 L15.3 10.8 H.7Z" fill="#1a6cf0" stroke="#1a6cf0" stroke-width="1" stroke-linejoin="round"/></svg>
<div class="t" style="left:389.8px;top:1400.0px;height:30px;line-height:30px;font-size:17.6px;color:#1f1f1f;">CYCLE_1</div>
<svg class="a" style="left:492px;top:1408px;" width="10" height="15" viewBox="0 0 10 15"><path d="M1.5 1.5 L8.5 7.5 L1.5 13.5" fill="none" stroke="#c4c4c4" stroke-width="1.6"/></svg>
<div class="t" style="left:524px;top:1400.0px;height:30px;line-height:30px;font-size:17.6px;color:#2970ff;">PU_1</div>
<div class="a" style="left:332.5px;top:1437px;width:2332px;height:3px;background:#8fb7f8;"></div>
<div class="a" style="left:331.3px;top:1437px;width:100.7px;height:3px;background:#1a6cf0;"></div>
<div class="a" style="left:332.5px;top:1440px;width:2332px;height:39px;background:#dce9fd;"></div>
<div class="a" style="left:332.5px;top:1440px;width:99.5px;height:39px;background:#ffffff;"></div>
<div class="a" style="left:332.5px;top:1479px;width:2332px;height:520px;background:#f7fbff;"></div>
<svg class="a" style="left:342.5px;top:1445px;" width="25" height="25" viewBox="0 0 25 25"><circle cx="12.5" cy="12.5" r="11.2" fill="#fff" stroke="#1a6cf0" stroke-width="1.9"/><text x="12.6" y="19" text-anchor="middle" font-family="Liberation Serif,serif" font-style="italic" font-weight="bold" font-size="19" fill="#1a6cf0">i</text></svg>
<div class="t" style="left:377.7px;top:1442.0px;height:30px;line-height:30px;font-size:18px;color:#2970ff;">信息</div>
<svg class="a" style="left:443.5px;top:1446px;" width="25" height="22" viewBox="0 0 25 22"><rect x="1" y="1" width="22.5" height="20" rx="2.8" fill="none" stroke="#555" stroke-width="1.7"/><path d="M1 5.8 H23.5" stroke="#555" stroke-width="1.6"/><rect x="5" y="10.5" width="6" height="6" fill="none" stroke="#555" stroke-width="1.5"/><path d="M14 11 H20 M14 16 H20" stroke="#555" stroke-width="1.6"/></svg>
<div class="t" style="left:478px;top:1442.0px;height:30px;line-height:30px;font-size:18px;color:#5a5a5a;">属性</div>
<div class="t" style="left:418px;top:1498.5px;height:30px;line-height:30px;font-size:18.4px;color:#8a8a8a;">常规</div>
<div class="t" style="left:568px;top:1498.5px;height:30px;line-height:30px;font-size:18.4px;color:#2970ff;">下载</div>
<div class="t" style="left:717.5px;top:1498.5px;height:30px;line-height:30px;font-size:18.4px;color:#8a8a8a;">编译</div>
<div class="a" style="left:364px;top:1534.7px;width:2300px;height:1.3px;background:#8ab4f8;"></div>
<div class="a" style="left:514px;top:1532.5px;width:150px;height:3.2px;background:#1a6cf0;"></div>
<div class="a" style="left:364px;top:1536px;width:2300px;height:447px;overflow:hidden">
<div class="a" style="left:0px;top:36px;width:2300px;height:36px;background:#ffffff;"></div>
<svg class="a" style="left:108.5px;top:44.5px" width="19" height="19" viewBox="0 0 19 19"><circle cx="9.5" cy="9.5" r="9" fill="#0b57d0"/><rect x="8.1" y="8" width="2.8" height="6.6" fill="#fff"/><rect x="8.1" y="4.2" width="2.8" height="2.6" fill="#fff"/></svg>
<svg class="a" style="left:267.0px;top:50px" width="11" height="8" viewBox="0 0 11 8"><path d="M.8 1 L5.5 5.8 L10.2 1" fill="none" stroke="#1a6cf0" stroke-width="1.7"/></svg>
<div class="t" style="left:291px;top:40px;height:30px;line-height:30px;font-size:17.9px;color:#2970ff">PLC_1</div>
<div class="a" style="left:0px;top:72px;width:2300px;height:36px;background:#fafafa;"></div>
<svg class="a" style="left:108.5px;top:80.5px" width="19" height="19" viewBox="0 0 19 19"><circle cx="9.5" cy="9.5" r="9" fill="#0b57d0"/><rect x="8.1" y="8" width="2.8" height="6.6" fill="#fff"/><rect x="8.1" y="4.2" width="2.8" height="2.6" fill="#fff"/></svg>
<svg class="a" style="left:294.0px;top:86px" width="11" height="8" viewBox="0 0 11 8"><path d="M.8 1 L5.5 5.8 L10.2 1" fill="none" stroke="#1a6cf0" stroke-width="1.7"/></svg>
<div class="t" style="left:318px;top:76px;height:30px;line-height:30px;font-size:17.9px;color:#2970ff">软件</div>
<div class="a" style="left:0px;top:108px;width:2300px;height:36px;background:#ffffff;"></div>
<svg class="a" style="left:108.5px;top:116.5px" width="19" height="19" viewBox="0 0 19 19"><circle cx="9.5" cy="9.5" r="9" fill="#0b57d0"/><rect x="8.1" y="8" width="2.8" height="6.6" fill="#fff"/><rect x="8.1" y="4.2" width="2.8" height="2.6" fill="#fff"/></svg>
<svg class="a" style="left:321.0px;top:122px" width="11" height="8" viewBox="0 0 11 8"><path d="M.8 1 L5.5 5.8 L10.2 1" fill="none" stroke="#1a6cf0" stroke-width="1.7"/></svg>
<div class="t" style="left:345px;top:112px;height:30px;line-height:30px;font-size:17.9px;color:#2970ff">全局变量集合GVS</div>
<div class="a" style="left:0px;top:144px;width:2300px;height:36px;background:#fafafa;"></div>
<svg class="a" style="left:108.5px;top:152.5px" width="19" height="19" viewBox="0 0 19 19"><circle cx="9.5" cy="9.5" r="9" fill="#0b57d0"/><rect x="8.1" y="8" width="2.8" height="6.6" fill="#fff"/><rect x="8.1" y="4.2" width="2.8" height="2.6" fill="#fff"/></svg>
<div class="t" style="left:372.5px;top:148px;height:30px;line-height:30px;font-size:17.9px;color:#262626">GVS_1删除成功</div>
<div class="t" style="left:2140.5px;top:145.4px;height:30px;line-height:30px;font-size:17.9px;color:#262626">11:03:13 AM</div>
<div class="a" style="left:0px;top:180px;width:2300px;height:36px;background:#ffffff;"></div>
<svg class="a" style="left:108.5px;top:188.5px" width="19" height="19" viewBox="0 0 19 19"><circle cx="9.5" cy="9.5" r="9" fill="#0b57d0"/><rect x="8.1" y="8" width="2.8" height="6.6" fill="#fff"/><rect x="8.1" y="4.2" width="2.8" height="2.6" fill="#fff"/></svg>
<div class="t" style="left:372.5px;top:184px;height:30px;line-height:30px;font-size:17.9px;color:#262626">GVS_1下载成功</div>
<div class="t" style="left:2140.5px;top:181.4px;height:30px;line-height:30px;font-size:17.9px;color:#262626">11:03:14 AM</div>
<div class="a" style="left:0px;top:216px;width:2300px;height:36px;background:#fafafa;"></div>
<svg class="a" style="left:108.5px;top:224.5px" width="19" height="19" viewBox="0 0 19 19"><circle cx="9.5" cy="9.5" r="9" fill="#0b57d0"/><rect x="8.1" y="8" width="2.8" height="6.6" fill="#fff"/><rect x="8.1" y="4.2" width="2.8" height="2.6" fill="#fff"/></svg>
<div class="t" style="left:372.5px;top:220px;height:30px;line-height:30px;font-size:17.9px;color:#262626">STD.R_TRIG_1下载成功</div>
<div class="t" style="left:2140.5px;top:217.4px;height:30px;line-height:30px;font-size:17.9px;color:#262626">11:03:14 AM</div>
<div class="a" style="left:0px;top:252px;width:2300px;height:36px;background:#ffffff;"></div>
<svg class="a" style="left:108.5px;top:260.5px" width="19" height="19" viewBox="0 0 19 19"><circle cx="9.5" cy="9.5" r="9" fill="#0b57d0"/><rect x="8.1" y="8" width="2.8" height="6.6" fill="#fff"/><rect x="8.1" y="4.2" width="2.8" height="2.6" fill="#fff"/></svg>
<svg class="a" style="left:321.0px;top:266px" width="11" height="8" viewBox="0 0 11 8"><path d="M.8 1 L5.5 5.8 L10.2 1" fill="none" stroke="#1a6cf0" stroke-width="1.7"/></svg>
<div class="t" style="left:345px;top:256px;height:30px;line-height:30px;font-size:17.9px;color:#2970ff">程序单元</div>
<div class="a" style="left:0px;top:288px;width:2300px;height:36px;background:#fafafa;"></div>
<svg class="a" style="left:108.5px;top:296.5px" width="19" height="19" viewBox="0 0 19 19"><circle cx="9.5" cy="9.5" r="9" fill="#0b57d0"/><rect x="8.1" y="8" width="2.8" height="6.6" fill="#fff"/><rect x="8.1" y="4.2" width="2.8" height="2.6" fill="#fff"/></svg>
<div class="t" style="left:372.5px;top:292px;height:30px;line-height:30px;font-size:17.9px;color:#262626">STD.PU_1删除成功</div>
<div class="t" style="left:2140.5px;top:289.4px;height:30px;line-height:30px;font-size:17.9px;color:#262626">11:03:13 AM</div>
<div class="a" style="left:0px;top:324px;width:2300px;height:36px;background:#ffffff;"></div>
<svg class="a" style="left:108.5px;top:332.5px" width="19" height="19" viewBox="0 0 19 19"><circle cx="9.5" cy="9.5" r="9" fill="#0b57d0"/><rect x="8.1" y="8" width="2.8" height="6.6" fill="#fff"/><rect x="8.1" y="4.2" width="2.8" height="2.6" fill="#fff"/></svg>
<div class="t" style="left:372.5px;top:328px;height:30px;line-height:30px;font-size:17.9px;color:#262626">STD.PU_1下载成功</div>
<div class="t" style="left:2140.5px;top:325.4px;height:30px;line-height:30px;font-size:17.9px;color:#262626">11:03:14 AM</div>
<div class="a" style="left:0px;top:360px;width:2300px;height:36px;background:#fafafa;"></div>
<svg class="a" style="left:108.5px;top:368.5px" width="19" height="19" viewBox="0 0 19 19"><circle cx="9.5" cy="9.5" r="9" fill="#0b57d0"/><rect x="8.1" y="8" width="2.8" height="6.6" fill="#fff"/><rect x="8.1" y="4.2" width="2.8" height="2.6" fill="#fff"/></svg>
<div class="t" style="left:372.5px;top:364px;height:30px;line-height:30px;font-size:17.9px;color:#262626">SYS.R_TRIG_V1下载成功</div>
<div class="t" style="left:2140.5px;top:361.4px;height:30px;line-height:30px;font-size:17.9px;color:#262626">11:03:14 AM</div>
<div class="a" style="left:0px;top:396px;width:2300px;height:36px;background:#ffffff;"></div>
<svg class="a" style="left:108.5px;top:404.5px" width="19" height="19" viewBox="0 0 19 19"><circle cx="9.5" cy="9.5" r="9" fill="#0b57d0"/><rect x="8.1" y="8" width="2.8" height="6.6" fill="#fff"/><rect x="8.1" y="4.2" width="2.8" height="2.6" fill="#fff"/></svg>
<div class="t" style="left:345px;top:400px;height:30px;line-height:30px;font-size:17.9px;color:#2970ff">任务</div>
<div class="a" style="left:0px;top:432px;width:2300px;height:36px;background:#fafafa;"></div>
<svg class="a" style="left:108.5px;top:440.5px" width="19" height="19" viewBox="0 0 19 19"><circle cx="9.5" cy="9.5" r="9" fill="#0b57d0"/><rect x="8.1" y="8" width="2.8" height="6.6" fill="#fff"/><rect x="8.1" y="4.2" width="2.8" height="2.6" fill="#fff"/></svg>
<div class="t" style="left:345px;top:436px;height:30px;line-height:30px;font-size:17.9px;color:#2970ff">IO映射变量</div>
<div class="a" style="left:0px;top:0px;width:2300px;height:36px;background:#f3f3f3;box-shadow:0 2px 6px rgba(0,0,0,.18)"></div>
<div class="a" style="left:250.5px;top:10px;width:1.3px;height:18px;background:#c9c9c9;"></div>
<div class="a" style="left:2126.5px;top:10px;width:1.3px;height:18px;background:#c9c9c9;"></div>
<div class="t" style="left:264px;top:3px;height:30px;line-height:30px;font-size:18px;color:#1f1f1f">路径</div>
<div class="t" style="left:2140px;top:3px;height:30px;line-height:30px;font-size:18px;color:#1f1f1f">时间</div>
</div>
<svg class="a" style="left:2066px;top:1841px;" width="20" height="28" viewBox="0 0 20 28"><path d="M1 1 V21.5 L5.8 17 L9.3 25.5 L12.8 24 L9.3 15.8 H16Z" fill="#fff" stroke="#111" stroke-width="1.2" stroke-linejoin="round"/></svg>
<div class="a" style="left:0px;top:1999px;width:2664px;height:32.5px;background:#007acc;"></div>
<div class="a" style="left:0px;top:2031.5px;width:2664px;height:2.5px;background:#e4e7ea;"></div>
<div class="t" style="left:-10.5px;top:2002.9px;height:30px;line-height:30px;font-size:18px;color:#fff;">信服务空闲</div>
<svg class="a" style="left:99.5px;top:2007.5px;" width="19" height="19" viewBox="0 0 19 19"><circle cx="9.5" cy="9.5" r="8.3" fill="none" stroke="#fff" stroke-width="1.5"/><path d="M6 6 L13 13 M13 6 L6 13" stroke="#fff" stroke-width="1.5"/></svg>
<div class="t" style="left:124px;top:2002.5px;height:30px;line-height:30px;font-size:18px;color:#fff;">0</div>
<svg class="a" style="left:140px;top:2007px;" width="19" height="18" viewBox="0 0 19 18"><path d="M9.5 1.5 L18 16.5 H1Z" fill="none" stroke="#fff" stroke-width="1.5" stroke-linejoin="round"/><path d="M9.5 6.5 V11.5 M9.5 13 V15" stroke="#fff" stroke-width="1.5"/></svg>
<div class="t" style="left:164px;top:2002.5px;height:30px;line-height:30px;font-size:18px;color:#fff;">0</div>
<div class="t" style="left:191.5px;top:2002.3px;height:30px;line-height:30px;font-size:19.2px;color:#fff;transform:scaleX(0.925);transform-origin:0 50%;">ClientID-22a2c68f-49ae-49e9-9ba3-1bdeec862371</div>
<div class="a" style="left:2662.8px;top:54px;width:1.2px;height:1945px;background:rgba(110,125,150,.22);"></div>
</body></html>
